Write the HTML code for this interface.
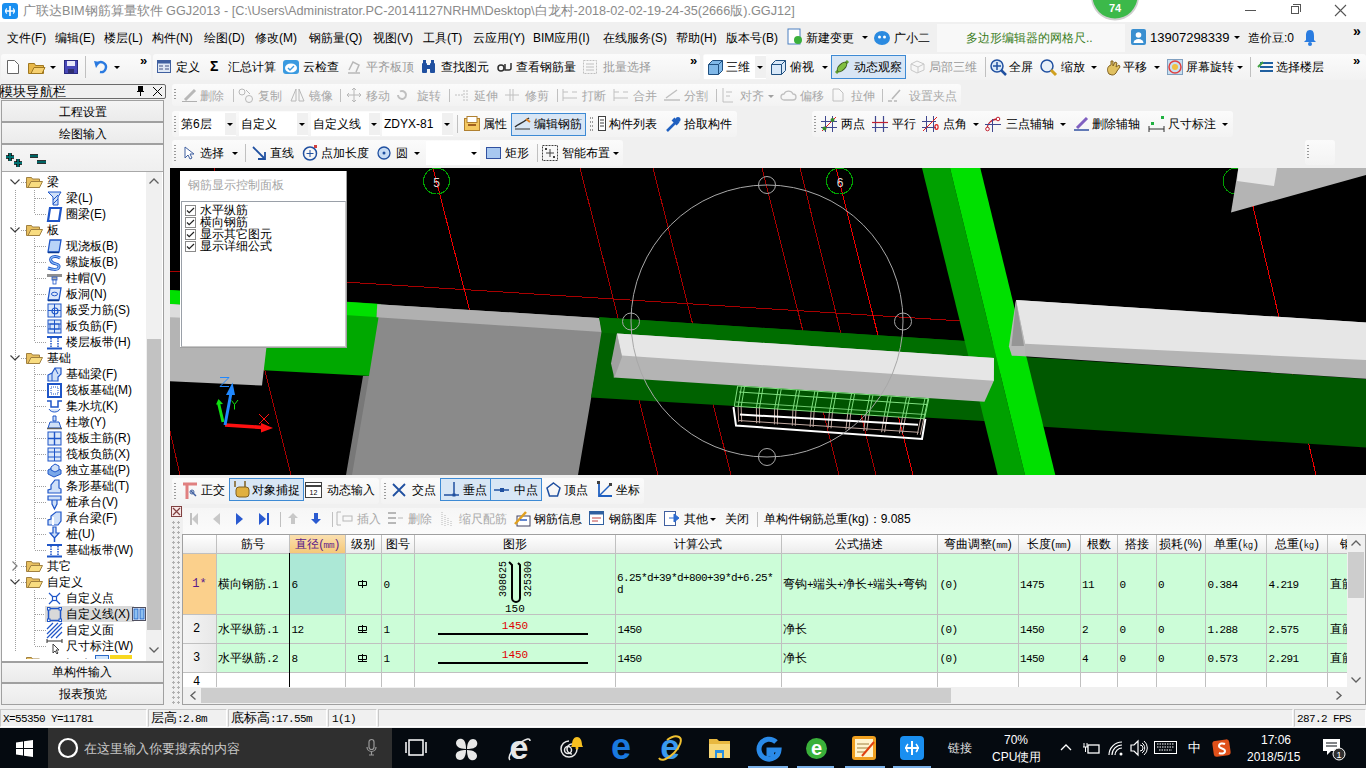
<!DOCTYPE html>
<html><head><meta charset="utf-8">
<style>
*{box-sizing:border-box;margin:0;padding:0}
html,body{width:1366px;height:768px;overflow:hidden;background:#f0f0f0;font-family:"Liberation Sans",sans-serif;font-size:12px;color:#000}
.a{position:absolute}
.t{position:absolute;white-space:nowrap}
svg{position:absolute;overflow:visible}
</style></head><body>
<div class="a" style="left:0px;top:0px;width:1366px;height:22px;background:#fff;"></div><svg class="a" style="left:2px;top:3px;" width="16" height="16" viewBox="0 0 16 16"><rect x="0" y="0" width="16" height="16" rx="3" fill="#1a8ff0"/><path d="M8 3v10M3 8h10" stroke="#fff" stroke-width="1.6" fill="none"/><path d="M5 5.5a3 3 0 0 0 0 5M11 5.5a3 3 0 0 1 0 5" stroke="#fff" stroke-width="1.2" fill="none"/></svg><div class="t" style="left:23px;top:3px;height:16px;line-height:16px;font-size:12.7px;color:#8a8a8a;">广联达BIM钢筋算量软件 GGJ2013 - [C:\Users\Administrator.PC-20141127NRHM\Desktop\白龙村-2018-02-02-19-24-35(2666版).GGJ12]</div><div class="a" style="left:1245px;top:10px;width:11px;height:1px;background:#555;"></div><div class="a" style="left:1291px;top:6px;width:8px;height:8px;border:1px solid #555;background:#fff"></div><div class="a" style="left:1293px;top:4px;width:8px;height:8px;border-top:1px solid #555;border-right:1px solid #555"></div><svg class="a" style="left:1335px;top:5px;" width="11" height="11" viewBox="0 0 11 11"><path d="M0 0L11 11M11 0L0 11" stroke="#555" stroke-width="1.1"/></svg><svg class="a" style="left:1090px;top:-29px;" width="50" height="50" viewBox="0 0 50 50"><circle cx="25" cy="25.5" r="24" fill="#cfcfcf"/><circle cx="25" cy="25" r="22.5" fill="#3cb94a"/><text x="25" y="41" font-size="11" font-weight="bold" fill="#fff" text-anchor="middle" font-family="Liberation Sans">74</text></svg><div class="a" style="left:0px;top:22px;width:1366px;height:31px;background:#f0f0f0;"></div><div class="t" style="left:7px;top:30px;height:16px;line-height:16px;font-size:12px;color:#000;">文件(F)</div><div class="t" style="left:55px;top:30px;height:16px;line-height:16px;font-size:12px;color:#000;">编辑(E)</div><div class="t" style="left:104px;top:30px;height:16px;line-height:16px;font-size:12px;color:#000;">楼层(L)</div><div class="t" style="left:152px;top:30px;height:16px;line-height:16px;font-size:12px;color:#000;">构件(N)</div><div class="t" style="left:204px;top:30px;height:16px;line-height:16px;font-size:12px;color:#000;">绘图(D)</div><div class="t" style="left:255px;top:30px;height:16px;line-height:16px;font-size:12px;color:#000;">修改(M)</div><div class="t" style="left:309px;top:30px;height:16px;line-height:16px;font-size:12px;color:#000;">钢筋量(Q)</div><div class="t" style="left:373px;top:30px;height:16px;line-height:16px;font-size:12px;color:#000;">视图(V)</div><div class="t" style="left:423px;top:30px;height:16px;line-height:16px;font-size:12px;color:#000;">工具(T)</div><div class="t" style="left:473px;top:30px;height:16px;line-height:16px;font-size:12px;color:#000;">云应用(Y)</div><div class="t" style="left:533px;top:30px;height:16px;line-height:16px;font-size:12px;color:#000;">BIM应用(I)</div><div class="t" style="left:603px;top:30px;height:16px;line-height:16px;font-size:12px;color:#000;">在线服务(S)</div><div class="t" style="left:676px;top:30px;height:16px;line-height:16px;font-size:12px;color:#000;">帮助(H)</div><div class="t" style="left:726px;top:30px;height:16px;line-height:16px;font-size:12px;color:#000;">版本号(B)</div><svg class="a" style="left:787px;top:29px;" width="16" height="16" viewBox="0 0 16 16"><rect x="1" y="0" width="12" height="15" fill="#fff" stroke="#4a7fc0"/><circle cx="11" cy="11" r="4" fill="#3bb03b"/></svg><div class="t" style="left:806px;top:30px;height:16px;line-height:16px;font-size:12px;color:#000;">新建变更</div><svg class="a" style="left:862px;top:36px;" width="6" height="3" viewBox="0 0 6 3"><polygon points="0,0 6,0 3,3" fill="#000"/></svg><svg class="a" style="left:874px;top:30px;" width="16" height="15" viewBox="0 0 16 15"><ellipse cx="8" cy="8" rx="8" ry="7" fill="#2a8ae0"/><circle cx="5.5" cy="7" r="1.5" fill="#fff"/><circle cx="10.5" cy="7" r="1.5" fill="#fff"/></svg><div class="t" style="left:894px;top:30px;height:16px;line-height:16px;font-size:12px;color:#000;">广小二</div><div class="a" style="left:937px;top:24px;width:188px;height:28px;background:#f8f8f8;"></div><div class="t" style="left:966px;top:30px;height:16px;line-height:16px;font-size:12px;color:#3a7d1c;">多边形编辑器的网格尺..</div><svg class="a" style="left:1131px;top:29px;" width="15" height="16" viewBox="0 0 15 16"><rect x="0" y="0" width="15" height="16" rx="2" fill="#3a8fd0"/><circle cx="7.5" cy="6" r="2.8" fill="#fff"/><path d="M2.5 14a5 4 0 0 1 10 0z" fill="#fff"/></svg><div class="t" style="left:1150px;top:30px;height:16px;line-height:16px;font-size:13px;color:#000;">13907298339</div><svg class="a" style="left:1234px;top:36px;" width="6" height="3" viewBox="0 0 6 3"><polygon points="0,0 6,0 3,3" fill="#000"/></svg><div class="t" style="left:1248px;top:30px;height:16px;line-height:16px;font-size:12px;color:#000;">造价豆:0</div><svg class="a" style="left:1303px;top:29px;" width="14" height="17" viewBox="0 0 14 17"><path d="M7 1C3.5 1 3 4 3 7v4L1 13h12l-2-2V7c0-3-.5-6-4-6z" fill="#2a7ce0"/><circle cx="7" cy="15" r="2" fill="#2a7ce0"/></svg><div class="t" style="left:1353px;top:23px;height:16px;line-height:16px;font-size:14px;color:#000;font-weight:bold">»</div><div class="a" style="left:1px;top:54px;width:150px;height:26px;background:linear-gradient(#fbfbfb,#f2f2f2);border-radius:3px"></div><div class="a" style="left:153px;top:54px;width:547px;height:26px;background:linear-gradient(#fbfbfb,#f2f2f2);border-radius:3px"></div><div class="a" style="left:703px;top:54px;width:663px;height:26px;background:linear-gradient(#fbfbfb,#f2f2f2);border-radius:3px"></div><svg class="a" style="left:7px;top:60px;" width="12" height="14" viewBox="0 0 12 14"><path d="M0.5 0.5h7l4 4v9h-11z" fill="#fff" stroke="#666"/></svg><svg class="a" style="left:28px;top:60px;" width="17" height="14" viewBox="0 0 17 14"><path d="M0.5 3.5h6l1 2h8v8h-15z" fill="#e8b84a" stroke="#a07820"/><path d="M3 13.5l3-6h11l-3 6z" fill="#f6d070" stroke="#a07820"/></svg><svg class="a" style="left:50px;top:66px;" width="6" height="3" viewBox="0 0 6 3"><polygon points="0,0 6,0 3,3" fill="#000"/></svg><svg class="a" style="left:64px;top:60px;" width="14" height="14" viewBox="0 0 14 14"><rect x="0.5" y="0.5" width="13" height="13" fill="#4848b8" stroke="#2a2a80"/><rect x="3" y="1" width="8" height="5" fill="#e8e8f8"/><rect x="4" y="9" width="6" height="4" fill="#303070"/></svg><div class="a" style="left:85px;top:56px;width:1px;height:22px;background:#c0c0c0;"></div><svg class="a" style="left:94px;top:60px;" width="12" height="13" viewBox="0 0 12 13"><path d="M3 4a5 5 0 1 1 3 8" stroke="#2a7ae0" stroke-width="2.4" fill="none"/><polygon points="0,1 6,2 2,8" fill="#2a7ae0"/></svg><svg class="a" style="left:114px;top:66px;" width="6" height="3" viewBox="0 0 6 3"><polygon points="0,0 6,0 3,3" fill="#000"/></svg><div class="t" style="left:140px;top:53px;height:16px;line-height:16px;font-size:13px;color:#000;font-weight:bold">»</div><svg class="a" style="left:157px;top:60px;" width="14" height="13" viewBox="0 0 14 13"><rect x="0.5" y="0.5" width="13" height="12" fill="#dfe8f5" stroke="#4060a0"/><rect x="0.5" y="0.5" width="13" height="3" fill="#4060a0"/><path d="M2 6h4M2 9h4M8 6h4M8 9h4" stroke="#405080"/></svg><div class="t" style="left:176px;top:59px;height:16px;line-height:16px;font-size:12px;color:#000;">定义</div><div class="t" style="left:210px;top:58px;height:16px;line-height:16px;font-size:14px;color:#000;font-weight:bold">Σ</div><div class="t" style="left:228px;top:59px;height:16px;line-height:16px;font-size:12px;color:#000;">汇总计算</div><svg class="a" style="left:283px;top:60px;" width="16" height="14" viewBox="0 0 16 14"><rect x="0" y="0" width="16" height="14" rx="3" fill="#3a9ae0"/><ellipse cx="8" cy="8" rx="6" ry="4.5" fill="#fff"/><path d="M5 8l2 2 4-4" stroke="#3a9ae0" stroke-width="1.4" fill="none"/></svg><div class="t" style="left:303px;top:59px;height:16px;line-height:16px;font-size:12px;color:#000;">云检查</div><svg class="a" style="left:347px;top:60px;" width="14" height="14" viewBox="0 0 14 14"><path d="M1 13h12M2 10l4-8 6 3-3 7" stroke="#b8b8b8" stroke-width="1.5" fill="none"/></svg><div class="t" style="left:366px;top:59px;height:16px;line-height:16px;font-size:12px;color:#9a9a9a;">平齐板顶</div><svg class="a" style="left:421px;top:60px;" width="16" height="14" viewBox="0 0 16 14"><rect x="1" y="3" width="5" height="10" rx="1" fill="#2050a0"/><rect x="9" y="3" width="5" height="10" rx="1" fill="#2050a0"/><rect x="5" y="5" width="5" height="4" fill="#2050a0"/><rect x="2" y="0" width="3" height="4" fill="#2050a0"/><rect x="10" y="0" width="3" height="4" fill="#2050a0"/></svg><div class="t" style="left:441px;top:59px;height:16px;line-height:16px;font-size:12px;color:#000;">查找图元</div><svg class="a" style="left:497px;top:62px;" width="16" height="10" viewBox="0 0 16 10"><circle cx="4" cy="6" r="3" stroke="#303030" stroke-width="1.5" fill="none"/><path d="M8 2v6h4a2 2 0 0 0 2-2V1" stroke="#303030" stroke-width="1.5" fill="none"/></svg><div class="t" style="left:516px;top:59px;height:16px;line-height:16px;font-size:12px;color:#000;">查看钢筋量</div><svg class="a" style="left:583px;top:60px;" width="14" height="14" viewBox="0 0 14 14"><rect x="0.5" y="0.5" width="13" height="13" fill="none" stroke="#c0c0c0" stroke-dasharray="2 1"/><path d="M3 4h8M3 7h8M3 10h8" stroke="#c0c0c0"/></svg><div class="t" style="left:603px;top:59px;height:16px;line-height:16px;font-size:12px;color:#9a9a9a;">批量选择</div><div class="t" style="left:690px;top:53px;height:16px;line-height:16px;font-size:13px;color:#000;font-weight:bold">»</div><div class="a" style="left:704px;top:55px;width:62px;height:24px;background:#fff;"></div><div class="a" style="left:755px;top:56px;width:11px;height:22px;background:#f0f0f0;"></div><svg class="a" style="left:708px;top:60px;" width="15" height="15" viewBox="0 0 15 15"><path d="M0.5 4.5l4-4h10v10l-4 4h-10z" fill="#80b8e8" stroke="#205080"/><path d="M0.5 4.5h10v10M10.5 4.5l4-4" stroke="#205080" fill="none"/></svg><div class="t" style="left:726px;top:59px;height:16px;line-height:16px;font-size:12px;color:#000;">三维</div><svg class="a" style="left:757px;top:66px;" width="6" height="3" viewBox="0 0 6 3"><polygon points="0,0 6,0 3,3" fill="#000"/></svg><svg class="a" style="left:771px;top:60px;" width="15" height="15" viewBox="0 0 15 15"><path d="M0.5 4.5l4-4h10v10l-4 4h-10z" fill="#d8e8f8" stroke="#205080"/><path d="M0.5 4.5h10v10M10.5 4.5l4-4" stroke="#205080" fill="none"/></svg><div class="t" style="left:790px;top:59px;height:16px;line-height:16px;font-size:12px;color:#000;">俯视</div><svg class="a" style="left:822px;top:66px;" width="6" height="3" viewBox="0 0 6 3"><polygon points="0,0 6,0 3,3" fill="#000"/></svg><div class="a" style="left:831px;top:55px;width:75px;height:24px;background:#d8e6f5;border:1px solid #3d8ad4"></div><svg class="a" style="left:834px;top:59px;" width="16" height="16" viewBox="0 0 16 16"><path d="M2 14L14 2" stroke="#60a030" stroke-width="3"/><ellipse cx="8" cy="8" rx="6" ry="3" transform="rotate(-45 8 8)" fill="#80c040" stroke="#406020"/></svg><div class="t" style="left:854px;top:59px;height:16px;line-height:16px;font-size:12px;color:#000;">动态观察</div><svg class="a" style="left:910px;top:60px;" width="15" height="14" viewBox="0 0 15 14"><path d="M1 4l6-3 7 3v6l-7 3-6-3z" fill="none" stroke="#c8c8c8"/><path d="M1 4l7 3 6-3M8 7v6" stroke="#c8c8c8" fill="none"/></svg><div class="t" style="left:929px;top:59px;height:16px;line-height:16px;font-size:12px;color:#9a9a9a;">局部三维</div><div class="a" style="left:985px;top:57px;width:1px;height:20px;background:#c0c0c0;"></div><svg class="a" style="left:990px;top:59px;" width="17" height="16" viewBox="0 0 17 16"><circle cx="7" cy="7" r="6" fill="#d8e8f8" stroke="#2050a0" stroke-width="1.5"/><path d="M7 3v8M3 7h8" stroke="#2050a0" stroke-width="1.5"/><path d="M11 11l5 5" stroke="#2050a0" stroke-width="2.5"/></svg><div class="t" style="left:1009px;top:59px;height:16px;line-height:16px;font-size:12px;color:#000;">全屏</div><svg class="a" style="left:1040px;top:59px;" width="17" height="16" viewBox="0 0 17 16"><circle cx="7" cy="7" r="6" fill="#e8f0f8" stroke="#2050a0" stroke-width="1.5"/><path d="M11 11l5 5" stroke="#d0a020" stroke-width="3"/></svg><div class="t" style="left:1061px;top:59px;height:16px;line-height:16px;font-size:12px;color:#000;">缩放</div><svg class="a" style="left:1091px;top:66px;" width="6" height="3" viewBox="0 0 6 3"><polygon points="0,0 6,0 3,3" fill="#000"/></svg><svg class="a" style="left:1106px;top:59px;" width="17" height="16" viewBox="0 0 17 16"><path d="M3 15c-2-3-2-6 0-8l2-1V2l2 0v5l2-4 2 1-1 4 3-2 1 2-3 4c-1 3-3 4-5 4z" fill="#e0c060" stroke="#806020"/></svg><div class="t" style="left:1123px;top:59px;height:16px;line-height:16px;font-size:12px;color:#000;">平移</div><svg class="a" style="left:1154px;top:66px;" width="6" height="3" viewBox="0 0 6 3"><polygon points="0,0 6,0 3,3" fill="#000"/></svg><svg class="a" style="left:1167px;top:59px;" width="16" height="16" viewBox="0 0 16 16"><rect x="0.5" y="0.5" width="15" height="15" fill="#c8e0f0" stroke="#80a0c0"/><circle cx="8" cy="8" r="6" fill="none" stroke="#e04040" stroke-width="1.5"/><circle cx="8" cy="8" r="3" fill="#f0c040"/></svg><div class="t" style="left:1186px;top:59px;height:16px;line-height:16px;font-size:12px;color:#000;">屏幕旋转</div><svg class="a" style="left:1237px;top:66px;" width="6" height="3" viewBox="0 0 6 3"><polygon points="0,0 6,0 3,3" fill="#000"/></svg><div class="a" style="left:1250px;top:57px;width:1px;height:20px;background:#c0c0c0;"></div><svg class="a" style="left:1258px;top:60px;" width="16" height="14" viewBox="0 0 16 14"><path d="M2 3h13M2 7h13M2 11h13" stroke="#2060a0" stroke-width="2"/><path d="M0 7l5-5" stroke="#40a040" stroke-width="2"/></svg><div class="t" style="left:1276px;top:59px;height:16px;line-height:16px;font-size:12px;color:#000;">选择楼层</div><div class="t" style="left:1353px;top:53px;height:16px;line-height:16px;font-size:13px;color:#000;font-weight:bold">»</div><div class="a" style="left:0px;top:84px;width:166px;height:622px;background:#f0f0f0;"></div><div class="a" style="left:0;top:84px;width:166px;height:15px;border:1px solid #6a6a6a;border-radius:2px;background:#f0f0f0"></div><div class="t" style="left:0px;top:84px;height:16px;line-height:16px;font-size:12.5px;color:#000;letter-spacing:0.2px">模块导航栏</div><svg class="a" style="left:137px;top:86px;" width="7" height="10" viewBox="0 0 7 10"><path d="M1 0.5h5M1.5 1v4.5M5.5 1v4.5M0 5.5h7M3.5 6v4" stroke="#000" fill="none"/><rect x="2" y="1" width="3" height="4" fill="#000"/></svg><svg class="a" style="left:153px;top:87px;" width="9" height="9" viewBox="0 0 9 9"><path d="M0 0L9 9M9 0L0 9" stroke="#000" stroke-width="1"/></svg><div class="a" style="left:1px;top:100px;width:163px;height:22px;border:1px solid #a0a0a0;background:linear-gradient(#f4f4f4,#ebebeb)"></div><div class="t" style="left:59px;top:104px;height:16px;line-height:16px;font-size:12px;color:#000;">工程设置</div><div class="a" style="left:1px;top:122px;width:163px;height:22px;border:1px solid #a0a0a0;background:linear-gradient(#f4f4f4,#ebebeb)"></div><div class="t" style="left:59px;top:126px;height:16px;line-height:16px;font-size:12px;color:#000;">绘图输入</div><div class="a" style="left:1px;top:144px;width:163px;height:518px;border:1px solid #a0a0a0;background:#fff"></div><div class="a" style="left:2px;top:145px;width:161px;height:27px;background:linear-gradient(#f6f6f6,#efefef);"></div><div class="a" style="left:2px;top:171px;width:161px;height:1px;background:#a8a8a8;"></div><svg class="a" style="left:6px;top:152px;" width="18" height="16" viewBox="0 0 18 16"><path d="M4 1v8M0 5h8" stroke="#000" stroke-width="3.6"/><path d="M4 1v8M0 5h8" stroke="#007070" stroke-width="1.8"/><path d="M12 7v8M8 11h8" stroke="#000" stroke-width="3.6"/><path d="M12 7v8M8 11h8" stroke="#007070" stroke-width="1.8"/></svg><svg class="a" style="left:29px;top:154px;" width="18" height="10" viewBox="0 0 18 10"><path d="M1 2h8" stroke="#000" stroke-width="3.6"/><path d="M1 2h8" stroke="#007070" stroke-width="1.8"/><path d="M8 8h9" stroke="#000" stroke-width="3.6"/><path d="M8 8h9" stroke="#007070" stroke-width="1.8"/></svg><div class="a" style="left:2px;top:172px;width:144px;height:489px;overflow:hidden"><div class="a" style="left:13px;top:18px;width:1px;height:462px;background:repeating-linear-gradient(#a0a0a0 0 1px,transparent 1px 2px)"></div><div class="a" style="left:32px;top:18px;width:1px;height:24px;background:repeating-linear-gradient(#a0a0a0 0 1px,transparent 1px 2px)"></div><div class="a" style="left:32px;top:66px;width:1px;height:104px;background:repeating-linear-gradient(#a0a0a0 0 1px,transparent 1px 2px)"></div><div class="a" style="left:32px;top:194px;width:1px;height:184px;background:repeating-linear-gradient(#a0a0a0 0 1px,transparent 1px 2px)"></div><div class="a" style="left:32px;top:418px;width:1px;height:56px;background:repeating-linear-gradient(#a0a0a0 0 1px,transparent 1px 2px)"></div><div class="a" style="left:19px;top:10px;width:5px;height:1px;background:repeating-linear-gradient(90deg,#a0a0a0 0 1px,transparent 1px 2px)"></div><svg class="a" style="left:8px;top:7px" width="10" height="6" viewBox="0 0 10 6"><path d="M0.5 0.5L5 5 9.5 0.5" stroke="#404040" stroke-width="1.2" fill="none"/></svg><svg class="a" style="left:24px;top:4px" width="17" height="12" viewBox="0 0 17 12"><path d="M0.5 1.5h5l1 1.5h7v8.5h-13z" fill="#e8c060" stroke="#a08040"/><path d="M2 11.5l3-6h11.5l-3 6z" fill="#f8dc80" stroke="#a08040"/></svg><div class="t" style="left:45px;top:2px;line-height:16px;font-size:12px">梁</div><div class="a" style="left:33px;top:26px;width:11px;height:1px;background:repeating-linear-gradient(90deg,#a0a0a0 0 1px,transparent 1px 2px)"></div><svg class="a" style="left:45px;top:19px" width="15" height="15" viewBox="0 0 15 15"><path d="M1 1h13l-3 5v8H6V6z" fill="#cfe0f8" stroke="#1f56c8"/><path d="M6 9l5-5M6 13l5-5" stroke="#1f56c8"/></svg><div class="t" style="left:64px;top:18px;line-height:16px;font-size:12px">梁(L)</div><div class="a" style="left:33px;top:42px;width:11px;height:1px;background:repeating-linear-gradient(90deg,#a0a0a0 0 1px,transparent 1px 2px)"></div><svg class="a" style="left:45px;top:35px" width="15" height="15" viewBox="0 0 15 15"><path d="M3 1h11l-2 13H1z" fill="#fff" stroke="#1f56c8" stroke-width="2.2"/></svg><div class="t" style="left:64px;top:34px;line-height:16px;font-size:12px">圈梁(E)</div><div class="a" style="left:19px;top:58px;width:5px;height:1px;background:repeating-linear-gradient(90deg,#a0a0a0 0 1px,transparent 1px 2px)"></div><svg class="a" style="left:8px;top:55px" width="10" height="6" viewBox="0 0 10 6"><path d="M0.5 0.5L5 5 9.5 0.5" stroke="#404040" stroke-width="1.2" fill="none"/></svg><svg class="a" style="left:24px;top:52px" width="17" height="12" viewBox="0 0 17 12"><path d="M0.5 1.5h5l1 1.5h7v8.5h-13z" fill="#e8c060" stroke="#a08040"/><path d="M2 11.5l3-6h11.5l-3 6z" fill="#f8dc80" stroke="#a08040"/></svg><div class="t" style="left:45px;top:50px;line-height:16px;font-size:12px">板</div><div class="a" style="left:33px;top:74px;width:11px;height:1px;background:repeating-linear-gradient(90deg,#a0a0a0 0 1px,transparent 1px 2px)"></div><svg class="a" style="left:45px;top:67px" width="15" height="15" viewBox="0 0 15 15"><path d="M3 1h11l-2 12H1z" fill="#b8d4f8" stroke="#1f56c8" stroke-width="1.3"/><path d="M1 13.5h11" stroke="#0a3a90" stroke-width="1.5"/></svg><div class="t" style="left:64px;top:66px;line-height:16px;font-size:12px">现浇板(B)</div><div class="a" style="left:33px;top:90px;width:11px;height:1px;background:repeating-linear-gradient(90deg,#a0a0a0 0 1px,transparent 1px 2px)"></div><svg class="a" style="left:45px;top:83px" width="15" height="15" viewBox="0 0 15 15"><path d="M13 3C8 0 2 2 4 6s9 2 8 6-8 2-11 1" fill="none" stroke="#1f56c8" stroke-width="3"/><path d="M13 3C8 0 2 2 4 6s9 2 8 6-8 2-11 1" fill="none" stroke="#8ec0f8" stroke-width="1.2"/></svg><div class="t" style="left:64px;top:82px;line-height:16px;font-size:12px">螺旋板(B)</div><div class="a" style="left:33px;top:106px;width:11px;height:1px;background:repeating-linear-gradient(90deg,#a0a0a0 0 1px,transparent 1px 2px)"></div><svg class="a" style="left:45px;top:99px" width="15" height="15" viewBox="0 0 15 15"><rect x="0" y="3" width="15" height="3" fill="#909090"/><rect x="5" y="6" width="5" height="3" fill="#b0b0b0" stroke="#1f56c8" stroke-width="0.8"/><rect x="6" y="9" width="3" height="4" fill="#fff" stroke="#1f56c8" stroke-width="0.8"/></svg><div class="t" style="left:64px;top:98px;line-height:16px;font-size:12px">柱帽(V)</div><div class="a" style="left:33px;top:122px;width:11px;height:1px;background:repeating-linear-gradient(90deg,#a0a0a0 0 1px,transparent 1px 2px)"></div><svg class="a" style="left:45px;top:115px" width="15" height="15" viewBox="0 0 15 15"><path d="M3 1h11l-2 12H1z" fill="#dbe8fa" stroke="#1f56c8" stroke-width="1.3"/><ellipse cx="7.5" cy="7" rx="3" ry="1.8" fill="none" stroke="#1f56c8"/><path d="M1 13.5h11" stroke="#0a3a90" stroke-width="1.5"/></svg><div class="t" style="left:64px;top:114px;line-height:16px;font-size:12px">板洞(N)</div><div class="a" style="left:33px;top:138px;width:11px;height:1px;background:repeating-linear-gradient(90deg,#a0a0a0 0 1px,transparent 1px 2px)"></div><svg class="a" style="left:45px;top:131px" width="15" height="15" viewBox="0 0 15 15"><rect x="1" y="1" width="13" height="13" fill="#dbe8fa" stroke="#1f56c8"/><path d="M7.5 1v13M1 7.5h13" stroke="#1f56c8"/><circle cx="8" cy="8" r="3" fill="none" stroke="#1f56c8" stroke-width="1.2"/></svg><div class="t" style="left:64px;top:130px;line-height:16px;font-size:12px">板受力筋(S)</div><div class="a" style="left:33px;top:154px;width:11px;height:1px;background:repeating-linear-gradient(90deg,#a0a0a0 0 1px,transparent 1px 2px)"></div><svg class="a" style="left:45px;top:147px" width="15" height="15" viewBox="0 0 15 15"><rect x="1" y="1" width="13" height="13" fill="#dbe8fa" stroke="#1f56c8"/><path d="M7.5 1v13M1 5h13M1 10h13" stroke="#1f56c8"/><rect x="3" y="5" width="9" height="5" fill="none" stroke="#1f56c8"/></svg><div class="t" style="left:64px;top:146px;line-height:16px;font-size:12px">板负筋(F)</div><div class="a" style="left:33px;top:170px;width:11px;height:1px;background:repeating-linear-gradient(90deg,#a0a0a0 0 1px,transparent 1px 2px)"></div><svg class="a" style="left:45px;top:163px" width="15" height="15" viewBox="0 0 15 15"><path d="M0 2h15M0 13.5h15" stroke="#1f56c8" stroke-width="2"/><path d="M4 3v10M11 3v10" stroke="#1f56c8" stroke-width="1.5" stroke-dasharray="1.5 1"/></svg><div class="t" style="left:64px;top:162px;line-height:16px;font-size:12px">楼层板带(H)</div><div class="a" style="left:19px;top:186px;width:5px;height:1px;background:repeating-linear-gradient(90deg,#a0a0a0 0 1px,transparent 1px 2px)"></div><svg class="a" style="left:8px;top:183px" width="10" height="6" viewBox="0 0 10 6"><path d="M0.5 0.5L5 5 9.5 0.5" stroke="#404040" stroke-width="1.2" fill="none"/></svg><svg class="a" style="left:24px;top:180px" width="17" height="12" viewBox="0 0 17 12"><path d="M0.5 1.5h5l1 1.5h7v8.5h-13z" fill="#e8c060" stroke="#a08040"/><path d="M2 11.5l3-6h11.5l-3 6z" fill="#f8dc80" stroke="#a08040"/></svg><div class="t" style="left:45px;top:178px;line-height:16px;font-size:12px">基础</div><div class="a" style="left:33px;top:202px;width:11px;height:1px;background:repeating-linear-gradient(90deg,#a0a0a0 0 1px,transparent 1px 2px)"></div><svg class="a" style="left:45px;top:195px" width="15" height="15" viewBox="0 0 15 15"><path d="M1 14V8l4-2 3-5h6v6l-3 3v4z" fill="#cfe0f8" stroke="#1f56c8" stroke-width="1.2"/><path d="M5 6v8M8 1l3 6" stroke="#1f56c8"/></svg><div class="t" style="left:64px;top:194px;line-height:16px;font-size:12px">基础梁(F)</div><div class="a" style="left:33px;top:218px;width:11px;height:1px;background:repeating-linear-gradient(90deg,#a0a0a0 0 1px,transparent 1px 2px)"></div><svg class="a" style="left:45px;top:211px" width="15" height="15" viewBox="0 0 15 15"><rect x="1" y="1" width="13" height="13" fill="#fff" stroke="#1f56c8" stroke-width="2"/><path d="M4 4h7v7H4z" fill="none" stroke="#1f56c8" stroke-dasharray="1 1"/></svg><div class="t" style="left:64px;top:210px;line-height:16px;font-size:12px">筏板基础(M)</div><div class="a" style="left:33px;top:234px;width:11px;height:1px;background:repeating-linear-gradient(90deg,#a0a0a0 0 1px,transparent 1px 2px)"></div><svg class="a" style="left:45px;top:227px" width="15" height="15" viewBox="0 0 15 15"><path d="M0 2h4v6h7V2h4" fill="none" stroke="#1f56c8" stroke-width="1.5"/><path d="M2 10c2 4 9 4 11 0" fill="#dbe8fa" stroke="#1f56c8"/></svg><div class="t" style="left:64px;top:226px;line-height:16px;font-size:12px">集水坑(K)</div><div class="a" style="left:33px;top:250px;width:11px;height:1px;background:repeating-linear-gradient(90deg,#a0a0a0 0 1px,transparent 1px 2px)"></div><svg class="a" style="left:45px;top:243px" width="15" height="15" viewBox="0 0 15 15"><path d="M6 1h3v5H6zM3 7h9l2 6H1z" fill="#cfe0f8" stroke="#1f56c8"/><path d="M0 13.5h15" stroke="#606060" stroke-width="1.5"/></svg><div class="t" style="left:64px;top:242px;line-height:16px;font-size:12px">柱墩(Y)</div><div class="a" style="left:33px;top:266px;width:11px;height:1px;background:repeating-linear-gradient(90deg,#a0a0a0 0 1px,transparent 1px 2px)"></div><svg class="a" style="left:45px;top:259px" width="15" height="15" viewBox="0 0 15 15"><rect x="1" y="1" width="13" height="13" fill="#dbe8fa" stroke="#1f56c8"/><path d="M7.5 1v13M1 7.5h13" stroke="#1f56c8" stroke-width="1.4"/></svg><div class="t" style="left:64px;top:258px;line-height:16px;font-size:12px">筏板主筋(R)</div><div class="a" style="left:33px;top:282px;width:11px;height:1px;background:repeating-linear-gradient(90deg,#a0a0a0 0 1px,transparent 1px 2px)"></div><svg class="a" style="left:45px;top:275px" width="15" height="15" viewBox="0 0 15 15"><rect x="1" y="1" width="13" height="13" fill="#dbe8fa" stroke="#1f56c8"/><path d="M7.5 1v13M1 5h13M1 10h13" stroke="#1f56c8"/></svg><div class="t" style="left:64px;top:274px;line-height:16px;font-size:12px">筏板负筋(X)</div><div class="a" style="left:33px;top:298px;width:11px;height:1px;background:repeating-linear-gradient(90deg,#a0a0a0 0 1px,transparent 1px 2px)"></div><svg class="a" style="left:45px;top:291px" width="15" height="15" viewBox="0 0 15 15"><path d="M1 7l6-3 7 3v4l-7 3-6-3z" fill="#7aa8e8" stroke="#1f56c8"/><path d="M4 4l4-3 4 2v4l-4 2-4-2z" fill="#cfe0f8" stroke="#1f56c8"/></svg><div class="t" style="left:64px;top:290px;line-height:16px;font-size:12px">独立基础(P)</div><div class="a" style="left:33px;top:314px;width:11px;height:1px;background:repeating-linear-gradient(90deg,#a0a0a0 0 1px,transparent 1px 2px)"></div><svg class="a" style="left:45px;top:307px" width="15" height="15" viewBox="0 0 15 15"><path d="M1 14v-3l3-1V6l4-5h4v8l2 1v4z" fill="#cfe0f8" stroke="#1f56c8" stroke-width="1.2"/></svg><div class="t" style="left:64px;top:306px;line-height:16px;font-size:12px">条形基础(T)</div><div class="a" style="left:33px;top:330px;width:11px;height:1px;background:repeating-linear-gradient(90deg,#a0a0a0 0 1px,transparent 1px 2px)"></div><svg class="a" style="left:45px;top:323px" width="15" height="15" viewBox="0 0 15 15"><path d="M1 1h13v4H1zM5 5h5v4l-2.5 5L5 9z" fill="#cfe0f8" stroke="#1f56c8" stroke-width="1.2"/></svg><div class="t" style="left:64px;top:322px;line-height:16px;font-size:12px">桩承台(V)</div><div class="a" style="left:33px;top:346px;width:11px;height:1px;background:repeating-linear-gradient(90deg,#a0a0a0 0 1px,transparent 1px 2px)"></div><svg class="a" style="left:45px;top:339px" width="15" height="15" viewBox="0 0 15 15"><path d="M1 14V9l3-1V5l5-4h5v9l-3 4z" fill="#cfe0f8" stroke="#1f56c8" stroke-width="1.2"/><path d="M6 6v8" stroke="#fff" stroke-width="2"/></svg><div class="t" style="left:64px;top:338px;line-height:16px;font-size:12px">承台梁(F)</div><div class="a" style="left:33px;top:362px;width:11px;height:1px;background:repeating-linear-gradient(90deg,#a0a0a0 0 1px,transparent 1px 2px)"></div><svg class="a" style="left:45px;top:355px" width="15" height="15" viewBox="0 0 15 15"><path d="M6 0h3v6h3l-4.5 5L3 6h3z" fill="#cfe0f8" stroke="#1f56c8" stroke-width="1.2"/><path d="M7.5 11v4" stroke="#1f56c8" stroke-width="1.5"/></svg><div class="t" style="left:64px;top:354px;line-height:16px;font-size:12px">桩(U)</div><div class="a" style="left:33px;top:378px;width:11px;height:1px;background:repeating-linear-gradient(90deg,#a0a0a0 0 1px,transparent 1px 2px)"></div><svg class="a" style="left:45px;top:371px" width="15" height="15" viewBox="0 0 15 15"><path d="M0 2h15M0 13.5h15" stroke="#1f56c8" stroke-width="2"/><path d="M4 3v10M11 3v10" stroke="#1f56c8" stroke-width="1.5" stroke-dasharray="1.5 1"/></svg><div class="t" style="left:64px;top:370px;line-height:16px;font-size:12px">基础板带(W)</div><div class="a" style="left:19px;top:394px;width:5px;height:1px;background:repeating-linear-gradient(90deg,#a0a0a0 0 1px,transparent 1px 2px)"></div><svg class="a" style="left:10px;top:389px" width="6" height="10" viewBox="0 0 6 10"><path d="M0.5 0.5L5 5 0.5 9.5" stroke="#808080" stroke-width="1.2" fill="none"/></svg><svg class="a" style="left:24px;top:388px" width="17" height="12" viewBox="0 0 17 12"><path d="M0.5 1.5h5l1 1.5h7v8.5h-13z" fill="#e8c060" stroke="#a08040"/><path d="M2 11.5l3-6h11.5l-3 6z" fill="#f8dc80" stroke="#a08040"/></svg><div class="t" style="left:45px;top:386px;line-height:16px;font-size:12px">其它</div><div class="a" style="left:19px;top:410px;width:5px;height:1px;background:repeating-linear-gradient(90deg,#a0a0a0 0 1px,transparent 1px 2px)"></div><svg class="a" style="left:8px;top:407px" width="10" height="6" viewBox="0 0 10 6"><path d="M0.5 0.5L5 5 9.5 0.5" stroke="#404040" stroke-width="1.2" fill="none"/></svg><svg class="a" style="left:24px;top:404px" width="17" height="12" viewBox="0 0 17 12"><path d="M0.5 1.5h5l1 1.5h7v8.5h-13z" fill="#e8c060" stroke="#a08040"/><path d="M2 11.5l3-6h11.5l-3 6z" fill="#f8dc80" stroke="#a08040"/></svg><div class="t" style="left:45px;top:402px;line-height:16px;font-size:12px">自定义</div><div class="a" style="left:33px;top:426px;width:11px;height:1px;background:repeating-linear-gradient(90deg,#a0a0a0 0 1px,transparent 1px 2px)"></div><svg class="a" style="left:45px;top:419px" width="15" height="15" viewBox="0 0 15 15"><path d="M2 2l11 11M13 2L2 13" stroke="#1f56c8" stroke-width="1.2"/><rect x="5.5" y="5.5" width="4" height="4" fill="#fff" stroke="#1f56c8" stroke-width="1.2"/></svg><div class="t" style="left:64px;top:418px;line-height:16px;font-size:12px">自定义点</div><div class="a" style="left:33px;top:442px;width:11px;height:1px;background:repeating-linear-gradient(90deg,#a0a0a0 0 1px,transparent 1px 2px)"></div><div class="a" style="left:43px;top:434px;width:89px;height:16px;background:#d9d9d9"></div><svg class="a" style="left:45px;top:435px" width="15" height="15" viewBox="0 0 15 15"><rect x="1.5" y="1.5" width="12" height="12" fill="none" stroke="#1f56c8" stroke-width="1.5"/><g fill="#fff" stroke="#1f56c8"><rect x="0.5" y="0.5" width="2.5" height="2.5"/><rect x="12" y="0.5" width="2.5" height="2.5"/><rect x="0.5" y="12" width="2.5" height="2.5"/><rect x="12" y="12" width="2.5" height="2.5"/></g></svg><div class="t" style="left:64px;top:434px;line-height:16px;font-size:12px">自定义线(X)</div><div class="a" style="left:33px;top:458px;width:11px;height:1px;background:repeating-linear-gradient(90deg,#a0a0a0 0 1px,transparent 1px 2px)"></div><svg class="a" style="left:45px;top:451px" width="15" height="15" viewBox="0 0 15 15"><path d="M0 6L6 0M0 11L11 0M0 15L15 0M4 15L15 4M9 15l6-6" stroke="#1f56c8" stroke-width="1.2"/></svg><div class="t" style="left:64px;top:450px;line-height:16px;font-size:12px">自定义面</div><div class="a" style="left:33px;top:474px;width:11px;height:1px;background:repeating-linear-gradient(90deg,#a0a0a0 0 1px,transparent 1px 2px)"></div><svg class="a" style="left:45px;top:467px" width="15" height="15" viewBox="0 0 15 15"><path d="M0 2h15M0 0v4M15 0v4" stroke="#303030"/><path d="M6 5v9l2-2 2 3 1-1-2-3h3z" fill="#fff" stroke="#404040"/></svg><div class="t" style="left:64px;top:466px;line-height:16px;font-size:12px">尺寸标注(W)</div></div><svg class="a" style="left:132px;top:607px;" width="14" height="14" viewBox="0 0 14 14"><rect x="0.5" y="0.5" width="13" height="13" fill="#fff" stroke="#505060"/><rect x="2" y="2" width="4" height="10" fill="#8ec0f0" stroke="#2a6ac8"/><rect x="8" y="2" width="4" height="10" fill="#8ec0f0" stroke="#2a6ac8"/></svg><div class="a" style="left:2px;top:654px;width:144px;height:5px;overflow:hidden"><svg class="a" style="left:24px;top:2px" width="17" height="12" viewBox="0 0 17 12"><path d="M0.5 1.5h5l1 1.5h7v8.5h-13z" fill="#e8c060" stroke="#a08040"/></svg><div class="t" style="left:64px;top:2px;line-height:16px;font-size:12px">运动</div><div class="a" style="left:93px;top:1px;width:14px;height:10px;border:1px solid #2a6ac8;background:#cfe4fa"></div><div class="a" style="left:108px;top:1px;width:22px;height:10px;background:#f8d820"></div></div><div class="a" style="left:146px;top:172px;width:16px;height:489px;background:#f0f0f0;"></div><svg class="a" style="left:149px;top:178px;" width="10" height="6" viewBox="0 0 10 6"><path d="M0.5 5.5L5 1 9.5 5.5" stroke="#606060" stroke-width="1.3" fill="none"/></svg><div class="a" style="left:147px;top:339px;width:14px;height:291px;background:#c2c2c2;"></div><svg class="a" style="left:149px;top:647px;" width="10" height="6" viewBox="0 0 10 6"><path d="M0.5 0.5L5 5 9.5 0.5" stroke="#606060" stroke-width="1.3" fill="none"/></svg><div class="a" style="left:1px;top:662px;width:163px;height:21px;border:1px solid #a0a0a0;background:linear-gradient(#f4f4f4,#ebebeb)"></div><div class="t" style="left:52px;top:664px;height:16px;line-height:16px;font-size:12px;color:#000;">单构件输入</div><div class="a" style="left:1px;top:683px;width:163px;height:22px;border:1px solid #a0a0a0;background:linear-gradient(#f4f4f4,#ebebeb)"></div><div class="t" style="left:59px;top:686px;height:16px;line-height:16px;font-size:12px;color:#000;">报表预览</div><div class="a" style="left:172px;top:84px;width:789px;height:22px;background:linear-gradient(#fbfbfb,#f3f3f3);border-radius:3px"></div><div class="a" style="left:174px;top:89px;width:2px;height:12px;background:repeating-linear-gradient(#9a9a9a 0 1px,transparent 1px 3px)"></div><svg class="a" style="left:181px;top:88px;" width="17" height="14" viewBox="0 0 17 14"><path d="M1 13.5h15" stroke="#b0b0b0"/><path d="M4 12l10-10" stroke="#b8b8b8" stroke-width="3"/></svg><div class="t" style="left:200px;top:88px;height:16px;line-height:16px;font-size:12px;color:#a8a8a8;">删除</div><div class="a" style="left:233px;top:89px;width:1px;height:13px;background:#c0c0c0;"></div><svg class="a" style="left:238px;top:88px;" width="16" height="15" viewBox="0 0 16 15"><circle cx="4" cy="4" r="3" fill="none" stroke="#b8b8b8"/><circle cx="11" cy="11" r="3.5" fill="none" stroke="#b8b8b8"/><path d="M8 2l4 4" stroke="#b8b8b8"/></svg><div class="t" style="left:258px;top:88px;height:16px;line-height:16px;font-size:12px;color:#a8a8a8;">复制</div><svg class="a" style="left:290px;top:88px;" width="15" height="14" viewBox="0 0 15 14"><path d="M6 1L1 13h5zM9 1l5 12H9z" fill="none" stroke="#b8b8b8"/></svg><div class="t" style="left:309px;top:88px;height:16px;line-height:16px;font-size:12px;color:#a8a8a8;">镜像</div><div class="a" style="left:340px;top:89px;width:1px;height:13px;background:#c0c0c0;"></div><svg class="a" style="left:347px;top:88px;" width="14" height="14" viewBox="0 0 14 14"><path d="M7 0v14M0 7h14M5 2l2-2 2 2M5 12l2 2 2-2M2 5l-2 2 2 2M12 5l2 2-2 2" stroke="#b8b8b8" fill="none"/></svg><div class="t" style="left:366px;top:88px;height:16px;line-height:16px;font-size:12px;color:#a8a8a8;">移动</div><svg class="a" style="left:396px;top:89px;" width="12" height="12" viewBox="0 0 12 12"><path d="M2 6a4 4 0 1 0 2-3.5" stroke="#c0c0c0" stroke-width="2" fill="none"/></svg><div class="t" style="left:417px;top:88px;height:16px;line-height:16px;font-size:12px;color:#a8a8a8;">旋转</div><div class="a" style="left:449px;top:89px;width:1px;height:13px;background:#c0c0c0;"></div><svg class="a" style="left:455px;top:89px;" width="14" height="12" viewBox="0 0 14 12"><path d="M0 6h8M9 1v11M12 1v11" stroke="#c0c0c0" stroke-dasharray="2 1" fill="none"/></svg><div class="t" style="left:474px;top:88px;height:16px;line-height:16px;font-size:12px;color:#a8a8a8;">延伸</div><svg class="a" style="left:505px;top:89px;" width="14" height="12" viewBox="0 0 14 12"><path d="M0 6h14M5 0v12M8 0v12" stroke="#c0c0c0" fill="none"/></svg><div class="t" style="left:525px;top:88px;height:16px;line-height:16px;font-size:12px;color:#a8a8a8;">修剪</div><div class="a" style="left:557px;top:89px;width:1px;height:13px;background:#c0c0c0;"></div><svg class="a" style="left:562px;top:89px;" width="16" height="12" viewBox="0 0 16 12"><path d="M1 3h5M10 3h5M1 9h14M1 0v12" stroke="#c0c0c0" fill="none"/></svg><div class="t" style="left:582px;top:88px;height:16px;line-height:16px;font-size:12px;color:#a8a8a8;">打断</div><svg class="a" style="left:613px;top:89px;" width="16" height="12" viewBox="0 0 16 12"><path d="M1 3h5M10 3h5M1 9h14M1 0v12" stroke="#c0c0c0" fill="none"/></svg><div class="t" style="left:633px;top:88px;height:16px;line-height:16px;font-size:12px;color:#a8a8a8;">合并</div><svg class="a" style="left:663px;top:88px;" width="18" height="14" viewBox="0 0 18 14"><path d="M1 12h16M3 10l11-8" stroke="#c0c0c0" stroke-width="1.5" fill="none"/></svg><div class="t" style="left:684px;top:88px;height:16px;line-height:16px;font-size:12px;color:#a8a8a8;">分割</div><div class="a" style="left:716px;top:89px;width:1px;height:13px;background:#c0c0c0;"></div><svg class="a" style="left:722px;top:88px;" width="12" height="14" viewBox="0 0 12 14"><path d="M1 0v14h10M4 4h6M4 8h4" stroke="#c0c0c0" fill="none"/></svg><div class="t" style="left:740px;top:88px;height:16px;line-height:16px;font-size:12px;color:#a8a8a8;">对齐</div><svg class="a" style="left:768px;top:95px;" width="6" height="3" viewBox="0 0 6 3"><polygon points="0,0 6,0 3,3" fill="#a0a0a0"/></svg><svg class="a" style="left:781px;top:89px;" width="15" height="12" viewBox="0 0 15 12"><path d="M3 11a3 3 0 0 1 0-6 5 5 0 0 1 9 0 3 3 0 0 1 0 6z" fill="none" stroke="#c0c0c0" stroke-width="1.3"/></svg><div class="t" style="left:800px;top:88px;height:16px;line-height:16px;font-size:12px;color:#a8a8a8;">偏移</div><svg class="a" style="left:832px;top:88px;" width="12" height="14" viewBox="0 0 12 14"><path d="M1 1h6l4 4v8H1z" fill="none" stroke="#c0c0c0"/></svg><div class="t" style="left:851px;top:88px;height:16px;line-height:16px;font-size:12px;color:#a8a8a8;">拉伸</div><div class="a" style="left:882px;top:89px;width:1px;height:13px;background:#c0c0c0;"></div><svg class="a" style="left:887px;top:88px;" width="16" height="14" viewBox="0 0 16 14"><path d="M1 13h4M7 13h3M5 11l8-9" stroke="#b8b8b8" stroke-width="1.6" fill="none"/></svg><div class="t" style="left:909px;top:88px;height:16px;line-height:16px;font-size:12px;color:#a8a8a8;">设置夹点</div><div class="a" style="left:172px;top:111px;width:565px;height:26px;background:linear-gradient(#fbfbfb,#f3f3f3);border-radius:3px"></div><div class="a" style="left:174px;top:116px;width:2px;height:16px;background:repeating-linear-gradient(#9a9a9a 0 1px,transparent 1px 3px)"></div><div class="a" style="left:179px;top:112px;width:57px;height:24px;background:#fff;"></div><div class="a" style="left:225px;top:113px;width:11px;height:22px;background:#f0f0f0;"></div><div class="t" style="left:181px;top:116px;height:16px;line-height:16px;font-size:12px;color:#000;">第6层</div><svg class="a" style="left:227px;top:123px;" width="6" height="3" viewBox="0 0 6 3"><polygon points="0,0 6,0 3,3" fill="#000"/></svg><div class="a" style="left:239px;top:112px;width:69px;height:24px;background:#fff;"></div><div class="a" style="left:297px;top:113px;width:11px;height:22px;background:#f0f0f0;"></div><div class="t" style="left:241px;top:116px;height:16px;line-height:16px;font-size:12px;color:#000;">自定义</div><svg class="a" style="left:299px;top:123px;" width="6" height="3" viewBox="0 0 6 3"><polygon points="0,0 6,0 3,3" fill="#000"/></svg><div class="a" style="left:311px;top:112px;width:69px;height:24px;background:#fff;"></div><div class="a" style="left:369px;top:113px;width:11px;height:22px;background:#f0f0f0;"></div><div class="t" style="left:313px;top:116px;height:16px;line-height:16px;font-size:12px;color:#000;">自定义线</div><svg class="a" style="left:371px;top:123px;" width="6" height="3" viewBox="0 0 6 3"><polygon points="0,0 6,0 3,3" fill="#000"/></svg><div class="a" style="left:382px;top:112px;width:71px;height:24px;background:#fff;"></div><div class="a" style="left:442px;top:113px;width:11px;height:22px;background:#f0f0f0;"></div><div class="t" style="left:384px;top:116px;height:16px;line-height:16px;font-size:12px;color:#000;">ZDYX-81</div><svg class="a" style="left:444px;top:123px;" width="6" height="3" viewBox="0 0 6 3"><polygon points="0,0 6,0 3,3" fill="#000"/></svg><div class="a" style="left:457px;top:115px;width:1px;height:18px;background:#c0c0c0;"></div><svg class="a" style="left:464px;top:116px;" width="16" height="15" viewBox="0 0 16 15"><rect x="0.5" y="2.5" width="15" height="12" fill="#f4c860" stroke="#b08030"/><rect x="3" y="0.5" width="10" height="6" fill="#fff" stroke="#b08030"/><path d="M4 9h8" stroke="#a06020" stroke-width="2"/></svg><div class="t" style="left:483px;top:116px;height:16px;line-height:16px;font-size:12px;color:#000;">属性</div><div class="a" style="left:511px;top:113px;width:75px;height:23px;background:#d8e6f5;border:1px solid #3d8ad4"></div><svg class="a" style="left:514px;top:117px;" width="17" height="13" viewBox="0 0 17 13"><path d="M1 10c3-3 6-3 14-9" stroke="#303030" stroke-width="1.5" fill="none"/><path d="M1 12h15" stroke="#303030"/><path d="M12 2l4 3" stroke="#e08020" stroke-width="2"/></svg><div class="t" style="left:534px;top:116px;height:16px;line-height:16px;font-size:12px;color:#000;">编辑钢筋</div><svg class="a" style="left:590px;top:116px;" width="16" height="15" viewBox="0 0 16 15"><rect x="8.5" y="0.5" width="7" height="14" fill="#fff" stroke="#404040"/><path d="M0 2h3M0 6h3M0 10h3M0 14h3" stroke="#404040" stroke-dasharray="1 1"/><path d="M10 4h4M10 7h4M10 10h4" stroke="#404040"/></svg><div class="t" style="left:609px;top:116px;height:16px;line-height:16px;font-size:12px;color:#000;">构件列表</div><svg class="a" style="left:666px;top:116px;" width="15" height="16" viewBox="0 0 15 16"><path d="M1 15l8-8" stroke="#2060c0" stroke-width="2.5"/><path d="M7 3l5 5" stroke="#2060c0" stroke-width="4"/><circle cx="12" cy="3.5" r="2.5" fill="#2060c0"/></svg><div class="t" style="left:684px;top:116px;height:16px;line-height:16px;font-size:12px;color:#000;">拾取构件</div><div class="a" style="left:812px;top:111px;width:421px;height:26px;background:linear-gradient(#fbfbfb,#f3f3f3);border-radius:3px"></div><div class="a" style="left:814px;top:116px;width:2px;height:16px;background:repeating-linear-gradient(#9a9a9a 0 1px,transparent 1px 3px)"></div><svg class="a" style="left:821px;top:116px;" width="16" height="16" viewBox="0 0 16 16"><path d="M4.5 0v16M11.5 0v16M0 5.5h16M0 11.5h16" stroke="#404890" stroke-width="1"/><path d="M1 15L15 1" stroke="#e02020" stroke-width="1"/><circle cx="3.5" cy="12.5" r="2" fill="#3a8a2a"/><circle cx="11.5" cy="4" r="2" fill="#3a8a2a"/></svg><div class="t" style="left:841px;top:116px;height:16px;line-height:16px;font-size:12px;color:#000;">两点</div><svg class="a" style="left:872px;top:116px;" width="16" height="16" viewBox="0 0 16 16"><path d="M3.5 0v16M11.5 0v16M0 11.5h16" stroke="#404890" stroke-width="1.2"/><path d="M0 6.5h16" stroke="#c02030" stroke-width="1.2"/></svg><div class="t" style="left:892px;top:116px;height:16px;line-height:16px;font-size:12px;color:#000;">平行</div><svg class="a" style="left:922px;top:116px;" width="17" height="16" viewBox="0 0 17 16"><path d="M4.5 0v16M11.5 0v16M0 5.5h14M0 11.5h14" stroke="#404890" stroke-width="1"/><path d="M1 15L15 1" stroke="#e02020" stroke-width="1"/><ellipse cx="14.5" cy="11" rx="1.6" ry="2.4" fill="none" stroke="#e02020" stroke-width="1.2"/></svg><div class="t" style="left:943px;top:116px;height:16px;line-height:16px;font-size:12px;color:#000;">点角</div><svg class="a" style="left:973px;top:123px;" width="6" height="3" viewBox="0 0 6 3"><polygon points="0,0 6,0 3,3" fill="#000"/></svg><svg class="a" style="left:985px;top:116px;" width="16" height="16" viewBox="0 0 16 16"><path d="M2 14c0-7 5-11 11-11" stroke="#c02030" stroke-width="1.3" fill="none"/><circle cx="2.5" cy="13" r="1.8" fill="#fff" stroke="#c02030"/><circle cx="13" cy="3" r="1.8" fill="#fff" stroke="#c02030"/><path d="M7.5 3v13M0 8.5h16" stroke="#404890" stroke-width="1"/></svg><div class="t" style="left:1006px;top:116px;height:16px;line-height:16px;font-size:12px;color:#000;">三点辅轴</div><svg class="a" style="left:1060px;top:123px;" width="6" height="3" viewBox="0 0 6 3"><polygon points="0,0 6,0 3,3" fill="#000"/></svg><svg class="a" style="left:1073px;top:116px;" width="17" height="15" viewBox="0 0 17 15"><path d="M1 14h15" stroke="#3050a0" stroke-width="1.5"/><path d="M4 12l10-10" stroke="#8060c0" stroke-width="3"/></svg><div class="t" style="left:1092px;top:116px;height:16px;line-height:16px;font-size:12px;color:#000;">删除辅轴</div><svg class="a" style="left:1148px;top:116px;" width="17" height="16" viewBox="0 0 17 16"><path d="M1 10v6M16 10v6M1 13h15" stroke="#303030"/><rect x="13" y="0" width="3" height="3" fill="#20b040"/><rect x="3" y="6" width="3" height="3" fill="#20b040"/></svg><div class="t" style="left:1168px;top:116px;height:16px;line-height:16px;font-size:12px;color:#000;">尺寸标注</div><svg class="a" style="left:1222px;top:123px;" width="6" height="3" viewBox="0 0 6 3"><polygon points="0,0 6,0 3,3" fill="#000"/></svg><div class="a" style="left:1305px;top:140px;width:30px;height:25px;background:linear-gradient(#fbfbfb,#f3f3f3);border-radius:3px"></div><div class="a" style="left:1307px;top:145px;width:2px;height:15px;background:repeating-linear-gradient(#9a9a9a 0 1px,transparent 1px 3px)"></div><div class="a" style="left:172px;top:140px;width:451px;height:26px;background:linear-gradient(#fbfbfb,#f3f3f3);border-radius:3px"></div><div class="a" style="left:174px;top:145px;width:2px;height:16px;background:repeating-linear-gradient(#9a9a9a 0 1px,transparent 1px 3px)"></div><svg class="a" style="left:184px;top:146px;" width="10" height="14" viewBox="0 0 10 14"><path d="M1 1v11l3-3 2 4 2-1-2-4h4z" fill="#fff" stroke="#4060a0"/></svg><div class="t" style="left:200px;top:145px;height:16px;line-height:16px;font-size:12px;color:#000;">选择</div><svg class="a" style="left:232px;top:152px;" width="6" height="3" viewBox="0 0 6 3"><polygon points="0,0 6,0 3,3" fill="#000"/></svg><div class="a" style="left:245px;top:144px;width:1px;height:18px;background:#c0c0c0;"></div><svg class="a" style="left:252px;top:146px;" width="14" height="14" viewBox="0 0 14 14"><path d="M1 1l11 11" stroke="#2050a0" stroke-width="1.8"/><path d="M6 13h7V6" stroke="#2050a0" stroke-width="1.8" fill="none"/></svg><div class="t" style="left:270px;top:145px;height:16px;line-height:16px;font-size:12px;color:#000;">直线</div><svg class="a" style="left:302px;top:144px;" width="16" height="17" viewBox="0 0 16 17"><circle cx="8" cy="9.5" r="6.5" fill="none" stroke="#2050a0" stroke-width="1.5"/><path d="M8 6v7M4.5 9.5h7" stroke="#2050a0"/><rect x="12" y="1" width="3" height="3" fill="#d04040"/></svg><div class="t" style="left:321px;top:145px;height:16px;line-height:16px;font-size:12px;color:#000;">点加长度</div><svg class="a" style="left:377px;top:146px;" width="14" height="14" viewBox="0 0 14 14"><circle cx="7" cy="7" r="6" fill="#c8dcf4" stroke="#2050a0" stroke-width="1.3"/><circle cx="7" cy="7" r="1.5" fill="#2050a0"/></svg><div class="t" style="left:396px;top:145px;height:16px;line-height:16px;font-size:12px;color:#000;">圆</div><svg class="a" style="left:414px;top:152px;" width="6" height="3" viewBox="0 0 6 3"><polygon points="0,0 6,0 3,3" fill="#000"/></svg><div class="a" style="left:426px;top:141px;width:54px;height:24px;background:#fff;"></div><svg class="a" style="left:471px;top:152px;" width="6" height="3" viewBox="0 0 6 3"><polygon points="0,0 6,0 3,3" fill="#000"/></svg><svg class="a" style="left:486px;top:147px;" width="15" height="12" viewBox="0 0 15 12"><rect x="0.5" y="0.5" width="14" height="11" fill="#a8c8f0" stroke="#3050a0"/></svg><div class="t" style="left:505px;top:145px;height:16px;line-height:16px;font-size:12px;color:#000;">矩形</div><div class="a" style="left:537px;top:144px;width:1px;height:18px;background:#c0c0c0;"></div><svg class="a" style="left:542px;top:145px;" width="16" height="16" viewBox="0 0 16 16"><rect x="0.5" y="0.5" width="15" height="15" fill="none" stroke="#404040" stroke-dasharray="2 1"/><path d="M4 8h8M8 4v8" stroke="#404040"/><rect x="3" y="3" width="2" height="2" fill="#404040"/><rect x="11" y="11" width="2" height="2" fill="#404040"/></svg><div class="t" style="left:562px;top:145px;height:16px;line-height:16px;font-size:12px;color:#000;">智能布置</div><svg class="a" style="left:613px;top:152px;" width="6" height="3" viewBox="0 0 6 3"><polygon points="0,0 6,0 3,3" fill="#000"/></svg><svg class="a" style="left:170px;top:168px;overflow:hidden" width="1196" height="307" viewBox="170 168 1196 307">
<rect x="170" y="168" width="1196" height="307" fill="#000"/>
<g stroke="#a80000" stroke-width="1" fill="none" shape-rendering="crispEdges">
<line x1="170" y1="271" x2="1366" y2="346.5"/>
<line x1="214" y1="168" x2="291" y2="475"/>
<line x1="580" y1="168" x2="658" y2="475"/>
<line x1="653" y1="168" x2="731" y2="475"/>
<line x1="762" y1="168" x2="839" y2="475"/>
<line x1="800" y1="168" x2="876" y2="475"/>
<line x1="140" y1="300" x2="180" y2="475"/>
</g>
<g stroke="#f00000" stroke-width="1" fill="none" shape-rendering="crispEdges">
<line x1="433" y1="168" x2="512" y2="475"/>
<line x1="836" y1="168" x2="913" y2="475"/>
<line x1="1244" y1="168" x2="1316" y2="475"/>
</g>
<!-- axis circles -->
<g fill="none" stroke="#00a000" stroke-width="1" shape-rendering="crispEdges">
<circle cx="436.5" cy="181" r="13"/>
<circle cx="839.5" cy="181" r="13"/>
<circle cx="1236" cy="181" r="13"/>
</g>
<!-- left green beam -->
<polygon points="140,288 381,304 371,376 140,363.5" fill="#00a800"/>
<polygon points="140,288 378,304 376,317 140,302" fill="#00e000"/>
<!-- left gray block -->
<polygon points="140,302 268,311 266.6,346 262,385.5 140,380" fill="#b4b4b4"/>
<polygon points="140,302 268,311 268,321 140,316" fill="#dcdcdc"/>
<!-- big gray block -->
<polygon points="363,376 372,376 355,475 346,475" fill="#787878"/>
<polygon points="377.3,304.2 602.6,318.2 602.5,331.4 578,475 352,475 369,376 378.5,317.5" fill="#8a8a8a"/>
<polygon points="377.3,304.2 602.6,318.2 601.8,331.9 376.4,317.3" fill="#b0b0b0"/>
<!-- middle green beam -->
<polygon points="599.1,317.2 1000,343.2 1000,422 590.9,397.5 601.5,332" fill="#006200"/>
<polygon points="599.1,317.2 1000,343.2 1000,358.5 602.6,332.8" fill="#006e00"/>
<!-- column dark part -->
<polygon points="922,168 950,168 1025,475 997.7,475" fill="#00a000"/>
<!-- middle gray beam -->
<polygon points="617,333.4 994,358 993.8,380.8 984.5,401.7 613.7,377.5" fill="#b4b4b4"/>
<polygon points="617,333.4 994,358 993.8,380.8 621.9,355.6" fill="#e6e6e6"/>
<polygon points="616.9,333.4 622,357 614.3,377.7 611,363.4" fill="#a0a0a0"/>
<!-- right beam dark green -->
<polygon points="1010,356 1366,379 1366,447.5 1043.8,426.7" fill="#005800"/>
<!-- column bright part -->
<polygon points="950,168 980.3,168 1055.3,475 1025,475" fill="#00e000"/>
<!-- right gray beam -->
<polygon points="1016,300 1366,322.5 1366,378.8 1011.8,355.4" fill="#b4b4b4"/>
<polygon points="1016,300 1366,322.5 1366,360 1025,343.7" fill="#e6e6e6"/>
<polygon points="1016,300 1025,343.7 1025,355.5 1011.8,355.4 1008.9,346.6" fill="#b8b8b8"/>
<polygon points="1016,301 1011.5,346 1024,346" fill="#959595"/>
<!-- top right gray block -->
<polygon points="1238.3,168 1366,168 1366,175 1231,212.5" fill="#b4b4b4"/>
<polygon points="1238.3,168 1277,168 1274,186 1237,181" fill="#e6e6e6"/>
<!-- rebar cage -->
<g fill="none" shape-rendering="auto">
<polygon points="737.7,386 928.8,398.6 924.5,418.8 734.3,406.2" fill="#005400" stroke="#80e080" stroke-width="1"/>
<line x1="739" y1="392" x2="927" y2="404.5" stroke="#80e080"/>
<line x1="736" y1="402" x2="925" y2="414.5" stroke="#70c870"/>
<path d="M741.5 386.3L738.1 406.5M744.5 386.8L741.1 407.0" stroke="#80e080"/>
<path d="M738.1 406.5L738.7 421.9M741.1 406.5L741.7 421.9" stroke="#c0a8a0"/>
<path d="M759.9 387.5L756.4 407.7M762.9 388.0L759.4 408.2" stroke="#80e080"/>
<path d="M756.4 407.7L756.6 423.2M759.4 407.7L759.6 423.2" stroke="#c0a8a0"/>
<path d="M778.2 388.7L774.6 408.9M781.2 389.2L777.6 409.4" stroke="#80e080"/>
<path d="M774.6 408.9L774.4 424.4M777.6 408.9L777.4 424.4" stroke="#c0a8a0"/>
<path d="M796.6 389.9L792.9 410.1M799.6 390.4L795.9 410.6" stroke="#80e080"/>
<path d="M792.9 410.1L792.3 425.7M795.9 410.1L795.3 425.7" stroke="#c0a8a0"/>
<path d="M814.9 391.1L811.1 411.3M817.9 391.6L814.1 411.8" stroke="#80e080"/>
<path d="M811.1 411.3L810.1 427.0M814.1 411.3L813.1 427.0" stroke="#c0a8a0"/>
<path d="M833.2 392.3L829.4 412.5M836.2 392.8L832.4 413.0" stroke="#80e080"/>
<path d="M829.4 412.5L828.0 428.3M832.4 412.5L831.0 428.3" stroke="#c0a8a0"/>
<path d="M851.6 393.5L847.7 413.7M854.6 394.0L850.7 414.2" stroke="#80e080"/>
<path d="M847.7 413.7L845.9 429.6M850.7 413.7L848.9 429.6" stroke="#c0a8a0"/>
<path d="M869.9 394.7L865.9 414.9M872.9 395.2L868.9 415.4" stroke="#80e080"/>
<path d="M865.9 414.9L863.7 430.9M868.9 414.9L866.7 430.9" stroke="#c0a8a0"/>
<path d="M888.3 395.9L884.2 416.1M891.3 396.4L887.2 416.6" stroke="#80e080"/>
<path d="M884.2 416.1L881.6 432.2M887.2 416.1L884.6 432.2" stroke="#c0a8a0"/>
<path d="M906.6 397.1L902.4 417.3M909.6 397.6L905.4 417.8" stroke="#80e080"/>
<path d="M902.4 417.3L899.4 433.4M905.4 417.3L902.4 433.4" stroke="#c0a8a0"/>
<path d="M925.0 398.3L920.7 418.5M928.0 398.8L923.7 419.0" stroke="#80e080"/>
<path d="M920.7 418.5L917.3 434.7M923.7 418.5L920.3 434.7" stroke="#c0a8a0"/>
<polyline points="733.5,407 736,425.6 922,439 925.4,418.8" stroke="#fff" stroke-width="2"/>
<line x1="740" y1="414.6" x2="918" y2="424.7" stroke="#fff" stroke-width="2"/>
<line x1="738.5" y1="420.5" x2="918.6" y2="432.3" stroke="#c0a8a0"/>
</g>
<!-- gizmo -->
<g fill="none" stroke="#a8a8a8" stroke-width="1" shape-rendering="auto">
<circle cx="767" cy="321" r="136"/>
<circle cx="767" cy="185" r="8.5"/>
<circle cx="767" cy="457" r="8.5"/>
<circle cx="631" cy="321.5" r="8.5"/>
<circle cx="903" cy="321.5" r="8.5"/>
</g>
<text x="436.5" y="186.5" font-size="12" fill="#d8d8d8" text-anchor="middle" font-family="Liberation Sans">5</text>
<text x="840" y="186.5" font-size="12" fill="#d8d8d8" text-anchor="middle" font-family="Liberation Sans">6</text>
<!-- axis indicator -->
<g shape-rendering="auto">
<line x1="225" y1="425" x2="263" y2="427.5" stroke="#ff1010" stroke-width="3.6"/>
<polygon points="261,423 273,428 261,432.5" fill="#ff1010"/>
<line x1="223" y1="422" x2="218.5" y2="403" stroke="#10e010" stroke-width="3"/>
<polygon points="216,404.5 218.5,399 223,404" fill="#10e010"/>
<line x1="225" y1="425" x2="231" y2="393" stroke="#2088ff" stroke-width="3"/>
<polygon points="226,395 232.5,382.5 235,395" fill="#2088ff"/>
<path d="M220 377.5h9l-9 9h9" stroke="#2088ff" stroke-width="1" fill="none"/>
<path d="M231.5 400.5l3 4 3.5-4.5M234.5 404.5v5" stroke="#10e010" stroke-width="1" fill="none"/>
<path d="M259 414l10 10M269 414l-10 10" stroke="#ff1010" stroke-width="1" fill="none"/>
</g>
</svg>
<div class="a" style="left:180px;top:171px;width:167px;height:177px;background:#fff;border-right:1px solid #a0a0a0;border-bottom:1px solid #a0a0a0"></div><div class="t" style="left:188px;top:177px;height:16px;line-height:16px;font-size:12px;color:#a6a6a6;">钢筋显示控制面板</div><div class="a" style="left:181px;top:201px;width:165px;height:146px;border:1px solid #9aa0a8;border-right-color:#c8c8c8;border-bottom-color:#c8c8c8;background:#fff"></div><svg class="a" style="left:185px;top:205px" width="11" height="11" viewBox="0 0 11 11"><rect x="0.5" y="0.5" width="10" height="10" fill="#fff" stroke="#8a8a8a"/><path d="M2 5.5l2.2 2.2L9 3" stroke="#202020" stroke-width="1.2" fill="none"/></svg><div class="t" style="left:200px;top:202px;line-height:16px;font-size:12px;color:#000">水平纵筋</div><svg class="a" style="left:185px;top:217px" width="11" height="11" viewBox="0 0 11 11"><rect x="0.5" y="0.5" width="10" height="10" fill="#fff" stroke="#8a8a8a"/><path d="M2 5.5l2.2 2.2L9 3" stroke="#202020" stroke-width="1.2" fill="none"/></svg><div class="t" style="left:200px;top:214px;line-height:16px;font-size:12px;color:#000">横向钢筋</div><svg class="a" style="left:185px;top:229px" width="11" height="11" viewBox="0 0 11 11"><rect x="0.5" y="0.5" width="10" height="10" fill="#fff" stroke="#8a8a8a"/><path d="M2 5.5l2.2 2.2L9 3" stroke="#202020" stroke-width="1.2" fill="none"/></svg><div class="t" style="left:200px;top:226px;line-height:16px;font-size:12px;color:#000">显示其它图元</div><svg class="a" style="left:185px;top:241px" width="11" height="11" viewBox="0 0 11 11"><rect x="0.5" y="0.5" width="10" height="10" fill="#fff" stroke="#8a8a8a"/><path d="M2 5.5l2.2 2.2L9 3" stroke="#202020" stroke-width="1.2" fill="none"/></svg><div class="t" style="left:200px;top:238px;line-height:16px;font-size:12px;color:#000">显示详细公式</div><div class="a" style="left:170px;top:475px;width:1196px;height:31px;background:#f0f0f0;"></div><div class="a" style="left:172px;top:478px;width:207px;height:26px;background:linear-gradient(#fbfbfb,#f3f3f3);border-radius:3px"></div><div class="a" style="left:174px;top:483px;width:2px;height:16px;background:repeating-linear-gradient(#9a9a9a 0 1px,transparent 1px 3px)"></div><svg class="a" style="left:182px;top:482px;" width="16" height="18" viewBox="0 0 16 18"><path d="M1 2h14M5 2v15" stroke="#e08080" stroke-width="3"/><path d="M9 9l5 5" stroke="#4060a0" stroke-width="1.5"/><circle cx="10" cy="10" r="2" fill="none" stroke="#4060a0"/></svg><div class="t" style="left:201px;top:482px;height:16px;line-height:16px;font-size:12px;color:#000;">正交</div><div class="a" style="left:229px;top:478px;width:75px;height:23px;background:#d8e6f5;border:1px solid #3d8ad4"></div><svg class="a" style="left:233px;top:481px;" width="17" height="17" viewBox="0 0 17 17"><path d="M2 0v6M12 0v6" stroke="#806020" stroke-width="1.5"/><rect x="3" y="6" width="13" height="10" rx="3" fill="#e0b040" stroke="#806020"/></svg><div class="t" style="left:252px;top:482px;height:16px;line-height:16px;font-size:12px;color:#000;">对象捕捉</div><svg class="a" style="left:305px;top:482px;" width="17" height="16" viewBox="0 0 17 16"><rect x="0.5" y="0.5" width="16" height="15" fill="#fff" stroke="#404040"/><path d="M0.5 4h16" stroke="#404040" stroke-width="2"/><text x="8.5" y="13" font-size="7" text-anchor="middle" font-family="Liberation Sans">12</text></svg><div class="t" style="left:327px;top:482px;height:16px;line-height:16px;font-size:12px;color:#000;">动态输入</div><div class="a" style="left:381px;top:478px;width:263px;height:26px;background:linear-gradient(#fbfbfb,#f3f3f3);border-radius:3px"></div><div class="a" style="left:384px;top:483px;width:2px;height:16px;background:repeating-linear-gradient(#9a9a9a 0 1px,transparent 1px 3px)"></div><svg class="a" style="left:392px;top:483px;" width="14" height="14" viewBox="0 0 14 14"><path d="M1 1l12 12M13 1L1 13" stroke="#2050a0" stroke-width="1.8"/></svg><div class="t" style="left:412px;top:482px;height:16px;line-height:16px;font-size:12px;color:#000;">交点</div><div class="a" style="left:440px;top:478px;width:51px;height:23px;background:#d8e6f5;border:1px solid #3d8ad4"></div><div class="a" style="left:490px;top:478px;width:52px;height:23px;background:#d8e6f5;border:1px solid #3d8ad4"></div><svg class="a" style="left:444px;top:482px;" width="16" height="15" viewBox="0 0 16 15"><path d="M0 13h15M10 0v13" stroke="#2050a0" stroke-width="1.5"/><rect x="8.5" y="11.5" width="3" height="3" fill="#2050a0"/></svg><div class="t" style="left:463px;top:482px;height:16px;line-height:16px;font-size:12px;color:#000;">垂点</div><svg class="a" style="left:494px;top:482px;" width="16" height="15" viewBox="0 0 16 15"><path d="M0 8h15" stroke="#2050a0" stroke-width="1.5"/><rect x="6" y="6" width="4" height="4" fill="#2050a0"/></svg><div class="t" style="left:514px;top:482px;height:16px;line-height:16px;font-size:12px;color:#000;">中点</div><svg class="a" style="left:546px;top:482px;" width="15" height="15" viewBox="0 0 15 15"><polygon points="7.5,1 14,6 11.5,14 3.5,14 1,6" fill="none" stroke="#2050a0" stroke-width="1.5"/></svg><div class="t" style="left:564px;top:482px;height:16px;line-height:16px;font-size:12px;color:#000;">顶点</div><svg class="a" style="left:596px;top:481px;" width="17" height="17" viewBox="0 0 17 17"><path d="M3 2v13h13" stroke="#2060c0" stroke-width="1.8" fill="none"/><path d="M3 15l11-11" stroke="#2060c0" stroke-width="1.5"/><rect x="1" y="0" width="3" height="3" fill="#404040"/><rect x="13" y="2" width="3" height="3" fill="#404040"/></svg><div class="t" style="left:616px;top:482px;height:16px;line-height:16px;font-size:12px;color:#000;">坐标</div><div class="a" style="left:170px;top:506px;width:12px;height:200px;background:#f0f0f0;"></div><svg class="a" style="left:171px;top:506px;" width="11" height="11" viewBox="0 0 11 11"><rect x="0.5" y="0.5" width="10" height="10" fill="#f8e8e8" stroke="#804040"/><path d="M2 2l7 7M9 2l-7 7" stroke="#804040" stroke-width="1.3"/></svg><div class="a" style="left:171px;top:520px;width:10px;height:184px;background-image:radial-gradient(#b0b0b0 1.1px,transparent 1.3px);background-size:5px 5px"></div><div class="a" style="left:183px;top:508px;width:1183px;height:26px;background:linear-gradient(#f6f6f6,#fbfbfb);"></div><svg class="a" style="left:190px;top:513px;" width="8" height="12" viewBox="0 0 8 12"><path d="M1 0v12" stroke="#c0c0c0" stroke-width="2"/><polygon points="8,0 8,12 2,6" fill="#c8c8c8"/></svg><svg class="a" style="left:213px;top:513px;" width="7" height="12" viewBox="0 0 7 12"><polygon points="7,0 7,12 0,6" fill="#c8c8c8"/></svg><svg class="a" style="left:236px;top:513px;" width="7" height="12" viewBox="0 0 7 12"><polygon points="0,0 0,12 7,6" fill="#2a5ad0"/></svg><svg class="a" style="left:259px;top:513px;" width="11" height="12" viewBox="0 0 11 12"><polygon points="0,0 0,12 7,6" fill="#2a5ad0"/><path d="M9 0v12" stroke="#2a5ad0" stroke-width="2"/></svg><div class="a" style="left:280px;top:512px;width:1px;height:15px;background:#c0c0c0;"></div><svg class="a" style="left:288px;top:513px;" width="10" height="11" viewBox="0 0 10 11"><polygon points="5,0 10,5 7,5 7,11 3,11 3,5 0,5" fill="#c8c8c8"/></svg><svg class="a" style="left:311px;top:513px;" width="10" height="11" viewBox="0 0 10 11"><polygon points="5,11 10,6 7,6 7,0 3,0 3,6 0,6" fill="#2a5ad0"/></svg><div class="a" style="left:332px;top:512px;width:1px;height:15px;background:#c0c0c0;"></div><svg class="a" style="left:336px;top:511px;" width="17" height="15" viewBox="0 0 17 15"><path d="M1 1h4M1 14h4M1 1v13" stroke="#b8b8b8" fill="none"/><rect x="7" y="5" width="9" height="5" fill="none" stroke="#b8b8b8"/></svg><div class="t" style="left:357px;top:511px;height:16px;line-height:16px;font-size:12px;color:#a8a8a8;">插入</div><svg class="a" style="left:387px;top:511px;" width="17" height="15" viewBox="0 0 17 15"><path d="M1 2h8M1 7h8M1 12h8" stroke="#b8b8b8" stroke-width="2"/><path d="M11 7h5" stroke="#b8b8b8"/></svg><div class="t" style="left:408px;top:511px;height:16px;line-height:16px;font-size:12px;color:#a8a8a8;">删除</div><svg class="a" style="left:441px;top:511px;" width="13" height="15" viewBox="0 0 13 15"><path d="M1 1v14M4 4v11M7 7v8M10 10v5" stroke="#b8b8b8" stroke-dasharray="1 1"/></svg><div class="t" style="left:459px;top:511px;height:16px;line-height:16px;font-size:12px;color:#a8a8a8;">缩尺配筋</div><svg class="a" style="left:514px;top:511px;" width="17" height="16" viewBox="0 0 17 16"><rect x="3" y="5" width="13" height="10" fill="#fff" stroke="#404060"/><path d="M1 13l11-12" stroke="#e0a020" stroke-width="2.5"/><path d="M6 9h7" stroke="#3060c0" stroke-width="1.5"/></svg><div class="t" style="left:534px;top:511px;height:16px;line-height:16px;font-size:12px;color:#000;">钢筋信息</div><svg class="a" style="left:589px;top:511px;" width="15" height="14" viewBox="0 0 15 14"><rect x="0.5" y="0.5" width="14" height="13" fill="#fff" stroke="#3060a0"/><rect x="0.5" y="0.5" width="14" height="3" fill="#3060a0"/><path d="M3 7h9M3 10h6" stroke="#c04040"/></svg><div class="t" style="left:609px;top:511px;height:16px;line-height:16px;font-size:12px;color:#000;">钢筋图库</div><svg class="a" style="left:664px;top:511px;" width="17" height="15" viewBox="0 0 17 15"><rect x="0.5" y="0.5" width="11" height="14" fill="#fff" stroke="#4060a0"/><path d="M5 7h8M10 3l5 4-5 4z" stroke="#2a6ad0" fill="#2a6ad0"/></svg><div class="t" style="left:684px;top:511px;height:16px;line-height:16px;font-size:12px;color:#000;">其他</div><svg class="a" style="left:710px;top:518px;" width="6" height="3" viewBox="0 0 6 3"><polygon points="0,0 6,0 3,3" fill="#000"/></svg><div class="t" style="left:725px;top:511px;height:16px;line-height:16px;font-size:12px;color:#000;">关闭</div><div class="a" style="left:757px;top:512px;width:1px;height:15px;background:#c0c0c0;"></div><div class="t" style="left:764px;top:511px;height:16px;line-height:16px;font-size:12px;color:#000;">单构件钢筋总重(kg)：9.085</div><div class="a" style="left:182px;top:534px;width:1184px;height:171px;background:#fff;border:1px solid #a0a0a0"></div><div class="a" style="left:183px;top:535px;width:1164px;height:152px;overflow:hidden"><div class="a" style="left:0px;top:0px;width:1200px;height:18px;background:linear-gradient(#ffffff,#ececec);"></div><div class="a" style="left:106.5px;top:0px;width:55.5px;height:18px;background:linear-gradient(#fbe0b0,#f5c878);"></div><div class="t" style="left:0px;top:1px;width:33px;text-align:center;line-height:16px;font-size:12px;color:#000;"></div><div class="t" style="left:33px;top:1px;width:73.5px;text-align:center;line-height:16px;font-size:12px;color:#000;">筋号</div><div class="t" style="left:106.5px;top:1px;width:55.5px;text-align:center;line-height:16px;font-size:12px;color:#5a1a8a;">直径(㎜)</div><div class="t" style="left:162px;top:1px;width:36.5px;text-align:center;line-height:16px;font-size:12px;color:#000;">级别</div><div class="t" style="left:198.5px;top:1px;width:33.0px;text-align:center;line-height:16px;font-size:12px;color:#000;">图号</div><div class="t" style="left:231.5px;top:1px;width:201.0px;text-align:center;line-height:16px;font-size:12px;color:#000;">图形</div><div class="t" style="left:432.5px;top:1px;width:165.5px;text-align:center;line-height:16px;font-size:12px;color:#000;">计算公式</div><div class="t" style="left:598px;top:1px;width:156.5px;text-align:center;line-height:16px;font-size:12px;color:#000;">公式描述</div><div class="t" style="left:754.5px;top:1px;width:80.5px;text-align:center;line-height:16px;font-size:12px;color:#000;">弯曲调整(㎜)</div><div class="t" style="left:835px;top:1px;width:62px;text-align:center;line-height:16px;font-size:12px;color:#000;">长度(㎜)</div><div class="t" style="left:897px;top:1px;width:37.5px;text-align:center;line-height:16px;font-size:12px;color:#000;">根数</div><div class="t" style="left:934.5px;top:1px;width:38.5px;text-align:center;line-height:16px;font-size:12px;color:#000;">搭接</div><div class="t" style="left:973px;top:1px;width:49.5px;text-align:center;line-height:16px;font-size:12px;color:#000;">损耗(%)</div><div class="t" style="left:1022.5px;top:1px;width:61.0px;text-align:center;line-height:16px;font-size:12px;color:#000;">单重(㎏)</div><div class="t" style="left:1083.5px;top:1px;width:61.0px;text-align:center;line-height:16px;font-size:12px;color:#000;">总重(㎏)</div><div class="t" style="left:1144.5px;top:1px;width:72.5px;text-align:center;line-height:16px;font-size:12px;color:#000;">钢筋归类</div><div class="a" style="left:0px;top:18px;width:33px;height:61px;background:#fbd08c;"></div><div class="a" style="left:0px;top:79px;width:33px;height:58px;background:linear-gradient(90deg,#f4f4f4,#e8e8e8);"></div><div class="a" style="left:0px;top:137px;width:33px;height:20px;background:#fff;"></div><div class="a" style="left:33px;top:18px;width:1200px;height:119px;background:#ccfdd8;"></div><div class="a" style="left:106.5px;top:18px;width:55.5px;height:61px;background:#ace8d6;"></div><div class="a" style="left:33px;top:0px;width:1px;height:153px;background:#c0c0c0;"></div><div class="a" style="left:106px;top:0px;width:1px;height:153px;background:#c0c0c0;"></div><div class="a" style="left:162px;top:0px;width:1px;height:153px;background:#c0c0c0;"></div><div class="a" style="left:198px;top:0px;width:1px;height:153px;background:#c0c0c0;"></div><div class="a" style="left:231px;top:0px;width:1px;height:153px;background:#c0c0c0;"></div><div class="a" style="left:432px;top:0px;width:1px;height:153px;background:#c0c0c0;"></div><div class="a" style="left:598px;top:0px;width:1px;height:153px;background:#c0c0c0;"></div><div class="a" style="left:754px;top:0px;width:1px;height:153px;background:#c0c0c0;"></div><div class="a" style="left:835px;top:0px;width:1px;height:153px;background:#c0c0c0;"></div><div class="a" style="left:897px;top:0px;width:1px;height:153px;background:#c0c0c0;"></div><div class="a" style="left:934px;top:0px;width:1px;height:153px;background:#c0c0c0;"></div><div class="a" style="left:973px;top:0px;width:1px;height:153px;background:#c0c0c0;"></div><div class="a" style="left:1022px;top:0px;width:1px;height:153px;background:#c0c0c0;"></div><div class="a" style="left:1083px;top:0px;width:1px;height:153px;background:#c0c0c0;"></div><div class="a" style="left:1144px;top:0px;width:1px;height:153px;background:#c0c0c0;"></div><div class="a" style="left:0px;top:18px;width:1200px;height:1px;background:#c0c0c0;"></div><div class="a" style="left:0px;top:79px;width:1200px;height:1px;background:#c0c0c0;"></div><div class="a" style="left:0px;top:108px;width:1200px;height:1px;background:#c0c0c0;"></div><div class="a" style="left:0px;top:137px;width:1200px;height:1px;background:#c0c0c0;"></div><div class="a" style="left:106px;top:18px;width:1px;height:135px;background:#000;"></div><div class="t" style="left:0px;top:41px;width:33px;text-align:center;line-height:16px;font-size:12px;color:#5a1a8a;font-family:'Liberation Mono',monospace">1*</div><div class="t" style="left:10px;top:86px;line-height:16px;font-size:12px;color:#000;font-family:'Liberation Mono',monospace">2</div><div class="t" style="left:10px;top:115px;line-height:16px;font-size:12px;color:#000;font-family:'Liberation Mono',monospace">3</div><div class="t" style="left:10px;top:139px;line-height:16px;font-size:12px;color:#000;font-family:'Liberation Mono',monospace">4</div><div class="t" style="left:35px;top:41px;line-height:16px;font-size:12px;color:#000;">横向钢筋<span style="font-family:'Liberation Mono',monospace;font-size:11px;letter-spacing:-0.6px">.1</span></div><div class="t" style="left:108.5px;top:41px;line-height:16px;font-size:12px;color:#000;"><span style="font-family:'Liberation Mono',monospace;font-size:11px;letter-spacing:-0.6px">6</span></div><svg class="a" style="left:175px;top:45px" width="9" height="9" viewBox="0 0 9 9"><path d="M0.5 1.5h8v4h-8z M4.5 0v8" stroke="#000" fill="none"/></svg><div class="t" style="left:200.5px;top:41px;line-height:16px;font-size:12px;color:#000;"><span style="font-family:'Liberation Mono',monospace;font-size:11px;letter-spacing:-0.6px">0</span></div><div class="t" style="left:434.5px;top:41px;line-height:16px;font-size:12px;color:#000;"></div><div class="t" style="left:600px;top:41px;line-height:16px;font-size:12px;color:#000;">弯钩<span style="font-family:'Liberation Mono',monospace;font-size:11px;letter-spacing:-0.6px">+</span>端头<span style="font-family:'Liberation Mono',monospace;font-size:11px;letter-spacing:-0.6px">+</span>净长<span style="font-family:'Liberation Mono',monospace;font-size:11px;letter-spacing:-0.6px">+</span>端头<span style="font-family:'Liberation Mono',monospace;font-size:11px;letter-spacing:-0.6px">+</span>弯钩</div><div class="t" style="left:756.5px;top:41px;line-height:16px;font-size:12px;color:#000;"><span style="font-family:'Liberation Mono',monospace;font-size:11px;letter-spacing:-0.6px">(0)</span></div><div class="t" style="left:837px;top:41px;line-height:16px;font-size:12px;color:#000;"><span style="font-family:'Liberation Mono',monospace;font-size:11px;letter-spacing:-0.6px">1475</span></div><div class="t" style="left:899px;top:41px;line-height:16px;font-size:12px;color:#000;"><span style="font-family:'Liberation Mono',monospace;font-size:11px;letter-spacing:-0.6px">11</span></div><div class="t" style="left:936.5px;top:41px;line-height:16px;font-size:12px;color:#000;"><span style="font-family:'Liberation Mono',monospace;font-size:11px;letter-spacing:-0.6px">0</span></div><div class="t" style="left:975px;top:41px;line-height:16px;font-size:12px;color:#000;"><span style="font-family:'Liberation Mono',monospace;font-size:11px;letter-spacing:-0.6px">0</span></div><div class="t" style="left:1024.5px;top:41px;line-height:16px;font-size:12px;color:#000;"><span style="font-family:'Liberation Mono',monospace;font-size:11px;letter-spacing:-0.6px">0.384</span></div><div class="t" style="left:1085.5px;top:41px;line-height:16px;font-size:12px;color:#000;"><span style="font-family:'Liberation Mono',monospace;font-size:11px;letter-spacing:-0.6px">4.219</span></div><div class="t" style="left:1146.5px;top:41px;line-height:16px;font-size:12px;color:#000;">直筋</div><div class="t" style="left:35px;top:86px;line-height:16px;font-size:12px;color:#000;">水平纵筋<span style="font-family:'Liberation Mono',monospace;font-size:11px;letter-spacing:-0.6px">.1</span></div><div class="t" style="left:108.5px;top:86px;line-height:16px;font-size:12px;color:#000;"><span style="font-family:'Liberation Mono',monospace;font-size:11px;letter-spacing:-0.6px">12</span></div><svg class="a" style="left:175px;top:90px" width="9" height="9" viewBox="0 0 9 9"><path d="M0.5 1.5h8v4h-8z M4.5 0v7.5 M0 7.5h9" stroke="#000" fill="none"/></svg><div class="t" style="left:200.5px;top:86px;line-height:16px;font-size:12px;color:#000;"><span style="font-family:'Liberation Mono',monospace;font-size:11px;letter-spacing:-0.6px">1</span></div><div class="t" style="left:434.5px;top:86px;line-height:16px;font-size:12px;color:#000;"><span style="font-family:'Liberation Mono',monospace;font-size:11px;letter-spacing:-0.6px">1450</span></div><div class="t" style="left:600px;top:86px;line-height:16px;font-size:12px;color:#000;">净长</div><div class="t" style="left:756.5px;top:86px;line-height:16px;font-size:12px;color:#000;"><span style="font-family:'Liberation Mono',monospace;font-size:11px;letter-spacing:-0.6px">(0)</span></div><div class="t" style="left:837px;top:86px;line-height:16px;font-size:12px;color:#000;"><span style="font-family:'Liberation Mono',monospace;font-size:11px;letter-spacing:-0.6px">1450</span></div><div class="t" style="left:899px;top:86px;line-height:16px;font-size:12px;color:#000;"><span style="font-family:'Liberation Mono',monospace;font-size:11px;letter-spacing:-0.6px">2</span></div><div class="t" style="left:936.5px;top:86px;line-height:16px;font-size:12px;color:#000;"><span style="font-family:'Liberation Mono',monospace;font-size:11px;letter-spacing:-0.6px">0</span></div><div class="t" style="left:975px;top:86px;line-height:16px;font-size:12px;color:#000;"><span style="font-family:'Liberation Mono',monospace;font-size:11px;letter-spacing:-0.6px">0</span></div><div class="t" style="left:1024.5px;top:86px;line-height:16px;font-size:12px;color:#000;"><span style="font-family:'Liberation Mono',monospace;font-size:11px;letter-spacing:-0.6px">1.288</span></div><div class="t" style="left:1085.5px;top:86px;line-height:16px;font-size:12px;color:#000;"><span style="font-family:'Liberation Mono',monospace;font-size:11px;letter-spacing:-0.6px">2.575</span></div><div class="t" style="left:1146.5px;top:86px;line-height:16px;font-size:12px;color:#000;">直筋</div><div class="t" style="left:35px;top:115px;line-height:16px;font-size:12px;color:#000;">水平纵筋<span style="font-family:'Liberation Mono',monospace;font-size:11px;letter-spacing:-0.6px">.2</span></div><div class="t" style="left:108.5px;top:115px;line-height:16px;font-size:12px;color:#000;"><span style="font-family:'Liberation Mono',monospace;font-size:11px;letter-spacing:-0.6px">8</span></div><svg class="a" style="left:175px;top:119px" width="9" height="9" viewBox="0 0 9 9"><path d="M0.5 1.5h8v4h-8z M4.5 0v7.5 M0 7.5h9" stroke="#000" fill="none"/></svg><div class="t" style="left:200.5px;top:115px;line-height:16px;font-size:12px;color:#000;"><span style="font-family:'Liberation Mono',monospace;font-size:11px;letter-spacing:-0.6px">1</span></div><div class="t" style="left:434.5px;top:115px;line-height:16px;font-size:12px;color:#000;"><span style="font-family:'Liberation Mono',monospace;font-size:11px;letter-spacing:-0.6px">1450</span></div><div class="t" style="left:600px;top:115px;line-height:16px;font-size:12px;color:#000;">净长</div><div class="t" style="left:756.5px;top:115px;line-height:16px;font-size:12px;color:#000;"><span style="font-family:'Liberation Mono',monospace;font-size:11px;letter-spacing:-0.6px">(0)</span></div><div class="t" style="left:837px;top:115px;line-height:16px;font-size:12px;color:#000;"><span style="font-family:'Liberation Mono',monospace;font-size:11px;letter-spacing:-0.6px">1450</span></div><div class="t" style="left:899px;top:115px;line-height:16px;font-size:12px;color:#000;"><span style="font-family:'Liberation Mono',monospace;font-size:11px;letter-spacing:-0.6px">4</span></div><div class="t" style="left:936.5px;top:115px;line-height:16px;font-size:12px;color:#000;"><span style="font-family:'Liberation Mono',monospace;font-size:11px;letter-spacing:-0.6px">0</span></div><div class="t" style="left:975px;top:115px;line-height:16px;font-size:12px;color:#000;"><span style="font-family:'Liberation Mono',monospace;font-size:11px;letter-spacing:-0.6px">0</span></div><div class="t" style="left:1024.5px;top:115px;line-height:16px;font-size:12px;color:#000;"><span style="font-family:'Liberation Mono',monospace;font-size:11px;letter-spacing:-0.6px">0.573</span></div><div class="t" style="left:1085.5px;top:115px;line-height:16px;font-size:12px;color:#000;"><span style="font-family:'Liberation Mono',monospace;font-size:11px;letter-spacing:-0.6px">2.291</span></div><div class="t" style="left:1146.5px;top:115px;line-height:16px;font-size:12px;color:#000;">直筋</div><div class="t" style="left:434px;top:35px;line-height:16px;font-size:12px;color:#000;font-family:'Liberation Mono',monospace;letter-spacing:-0.6px;font-size:11px">6.25*d+39*d+800+39*d+6.25*</div><div class="t" style="left:434px;top:47px;line-height:16px;font-size:12px;color:#000;font-family:'Liberation Mono',monospace;letter-spacing:-0.6px;font-size:11px">d</div><div class="t" style="left:231.5px;top:83px;width:201.0px;text-align:center;line-height:16px;font-size:11px;color:#e00000;font-family:'Liberation Mono',monospace">1450</div><div class="a" style="left:255px;top:98px;width:150px;height:2px;background:#000;"></div><div class="t" style="left:231.5px;top:112px;width:201.0px;text-align:center;line-height:16px;font-size:11px;color:#e00000;font-family:'Liberation Mono',monospace">1450</div><div class="a" style="left:255px;top:127px;width:150px;height:2px;background:#000;"></div><svg class="a" style="left:316px;top:22px" width="40" height="60" viewBox="0 0 40 60"><path d="M10 5l3 3v33a4 4 0 0 0 8 0V8l-2-2" stroke="#000" stroke-width="2" fill="none"/></svg><div class="t" style="left:322px;top:57px;line-height:16px;font-size:12px;color:#000;"></div><div class="t" style="left:316px;top:22px;font-size:10px;line-height:10px;transform:rotate(-90deg);transform-origin:0 0;position:absolute;top:62px;font-family:'Liberation Mono',monospace">308625</div><div class="t" style="left:341px;top:22px;font-size:10px;line-height:10px;transform:rotate(-90deg);transform-origin:0 0;position:absolute;top:62px;font-family:'Liberation Mono',monospace">325300</div><div class="t" style="left:322px;top:66px;line-height:16px;font-size:11px;color:#000;font-family:'Liberation Mono',monospace">150</div></div><div class="a" style="left:183px;top:687px;width:1164px;height:17px;background:#f0f0f0;"></div><svg class="a" style="left:190px;top:691px;" width="6" height="9" viewBox="0 0 6 9"><path d="M5.5 0.5L1 4.5 5.5 8.5" stroke="#606060" stroke-width="1.4" fill="none"/></svg><div class="a" style="left:201px;top:688px;width:750px;height:15px;background:#cdcdcd;"></div><svg class="a" style="left:1336px;top:691px;" width="6" height="9" viewBox="0 0 6 9"><path d="M0.5 0.5L5 4.5 0.5 8.5" stroke="#606060" stroke-width="1.4" fill="none"/></svg><div class="a" style="left:1347px;top:535px;width:18px;height:152px;background:#f0f0f0;"></div><svg class="a" style="left:1351px;top:540px;" width="10" height="6" viewBox="0 0 10 6"><path d="M0.5 5.5L5 1 9.5 5.5" stroke="#606060" stroke-width="1.3" fill="none"/></svg><div class="a" style="left:1348px;top:552px;width:16px;height:46px;background:#cdcdcd;"></div><div class="a" style="left:1347px;top:687px;width:18px;height:17px;background:#f0f0f0;"></div><svg class="a" style="left:1351px;top:677px;" width="10" height="6" viewBox="0 0 10 6"><path d="M0.5 0.5L5 5 9.5 0.5" stroke="#606060" stroke-width="1.3" fill="none"/></svg><div class="a" style="left:0px;top:706px;width:1366px;height:22px;background:#f0f0f0;"></div><div class="a" style="left:0px;top:709px;width:147px;height:18px;border-top:1px solid #c8c8c8;border-left:1px solid #c8c8c8;border-right:1px solid #fff;border-bottom:1px solid #fff"></div><div class="a" style="left:148px;top:709px;width:79px;height:18px;border-top:1px solid #c8c8c8;border-left:1px solid #c8c8c8;border-right:1px solid #fff;border-bottom:1px solid #fff"></div><div class="a" style="left:228px;top:709px;width:99px;height:18px;border-top:1px solid #c8c8c8;border-left:1px solid #c8c8c8;border-right:1px solid #fff;border-bottom:1px solid #fff"></div><div class="a" style="left:328px;top:709px;width:49px;height:18px;border-top:1px solid #c8c8c8;border-left:1px solid #c8c8c8;border-right:1px solid #fff;border-bottom:1px solid #fff"></div><div class="a" style="left:378px;top:709px;width:915px;height:18px;border-top:1px solid #c8c8c8;border-left:1px solid #c8c8c8;border-right:1px solid #fff;border-bottom:1px solid #fff"></div><div class="a" style="left:1294px;top:709px;width:72px;height:18px;border-top:1px solid #c8c8c8;border-left:1px solid #c8c8c8;border-right:1px solid #fff;border-bottom:1px solid #fff"></div><div class="t" style="left:3px;top:710px;height:16px;line-height:16px;font-size:12px;color:#000;"><span style="font-family:'Liberation Mono',monospace;font-size:11px;letter-spacing:-0.6px">X=55350 Y=11781</span></div><div class="t" style="left:151px;top:710px;height:16px;line-height:16px;font-size:12.5px;color:#000;">层高<span style="font-family:'Liberation Mono',monospace;font-size:11px;letter-spacing:-0.6px">:2.8m</span></div><div class="t" style="left:231px;top:710px;height:16px;line-height:16px;font-size:12.5px;color:#000;">底标高<span style="font-family:'Liberation Mono',monospace;font-size:11px;letter-spacing:-0.6px">:17.55m</span></div><div class="t" style="left:332px;top:710px;height:16px;line-height:16px;font-size:12px;color:#000;"><span style="font-family:'Liberation Mono',monospace;font-size:11px;letter-spacing:-0.6px">1(1)</span></div><div class="t" style="left:1297px;top:710px;height:16px;line-height:16px;font-size:12px;color:#000;"><span style="font-family:'Liberation Mono',monospace;font-size:11px;letter-spacing:-0.6px">287.2 FPS</span></div><div class="a" style="left:0px;top:728px;width:1366px;height:40px;background:#050a10;"></div><svg class="a" style="left:16px;top:740px;" width="17" height="17" viewBox="0 0 17 17"><path d="M0 2.5l7-1v6.5H0zM8 1.3l9-1.3v8H8zM0 9h7v6.5l-7-1zM8 9h9v8l-9-1.3z" fill="#fff"/></svg><div class="a" style="left:48px;top:728px;width:344px;height:40px;background:#2f2f2f;"></div><svg class="a" style="left:57px;top:737px;" width="22" height="22" viewBox="0 0 22 22"><circle cx="11" cy="11" r="9" fill="none" stroke="#fff" stroke-width="2.2"/></svg><div class="t" style="left:84px;top:741px;height:16px;line-height:16px;font-size:13px;color:#c8c8c8;">在这里输入你要搜索的内容</div><svg class="a" style="left:366px;top:739px;" width="11" height="17" viewBox="0 0 11 17"><rect x="3" y="0.5" width="5" height="10" rx="2.5" fill="none" stroke="#9a9a9a" stroke-width="1.2"/><path d="M1 8a4.5 4.5 0 0 0 9 0M5.5 13v3M3 16h5" stroke="#9a9a9a" stroke-width="1.2" fill="none"/></svg><svg class="a" style="left:405px;top:739px;" width="22" height="17" viewBox="0 0 22 17"><rect x="4" y="1" width="14" height="15" fill="none" stroke="#fff" stroke-width="1.5"/><path d="M1 3v11M21 3v11" stroke="#fff" stroke-width="1.5"/></svg><svg class="a" style="left:455px;top:738px;" width="23" height="23" viewBox="0 0 23 23"><g fill="#e8e8e8"><path d="M11 11C4 11 1 8 1 5s3-5 6-4 4 5 4 10z"/><path d="M12 11c0-7 3-10 6-10s5 3 4 6-5 4-10 4z"/><path d="M12 12c7 0 10 3 10 6s-3 5-6 4-4-5-4-10z"/><path d="M11 12c0 7-3 10-6 10s-5-3-4-6 5-4 10-4z"/></g></svg><svg class="a" style="left:506px;top:735px;" width="26" height="28" viewBox="0 0 26 28"><text x="13" y="24" font-size="34" font-weight="bold" fill="#e8e8e8" text-anchor="middle" font-family="Liberation Sans">e</text><path d="M4 25c-3-3 3-12 10-17s10-5 10-2" stroke="#e8e8e8" stroke-width="1.6" fill="none"/></svg><svg class="a" style="left:557px;top:735px;" width="26" height="26" viewBox="0 0 26 26"><path d="M12 6a8 8 0 1 0 8 8 5 5 0 1 0-5 5" fill="none" stroke="#e8e8e8" stroke-width="1.5"/><circle cx="11" cy="15" r="3.5" fill="none" stroke="#e8e8e8" stroke-width="1.5"/><path d="M15 10c0-5 2-8 5-8s5 3 5 8l1 2H14z" fill="#f8c020"/><circle cx="20" cy="13" r="1.5" fill="#f8c020"/></svg><svg class="a" style="left:607px;top:734px;" width="28" height="28" viewBox="0 0 28 28"><text x="14" y="25" font-size="36" font-weight="bold" fill="#1a7ae0" text-anchor="middle" font-family="Liberation Sans">e</text></svg><svg class="a" style="left:655px;top:734px;" width="30" height="29" viewBox="0 0 30 29"><text x="15" y="25" font-size="35" font-weight="bold" fill="#3a9af0" text-anchor="middle" font-family="Liberation Sans">e</text><path d="M4 24c2 4 9 1 15-5s9-14 5-16-8 0-12 3" stroke="#f0c030" stroke-width="2" fill="none"/></svg><svg class="a" style="left:708px;top:737px;" width="23" height="22" viewBox="0 0 23 22"><path d="M1 2h8l2 2h11v17H1z" fill="#e8b840"/><rect x="1" y="7" width="21" height="14" fill="#f8d878"/><rect x="7" y="13" width="9" height="8" fill="#2a90e0"/><rect x="9" y="16" width="5" height="5" fill="#f8d878"/></svg><svg class="a" style="left:756px;top:736px;" width="25" height="25" viewBox="0 0 25 25"><path d="M20 6a10 10 0 1 0 3 8h-10v4h5" fill="none" stroke="#2a8ae8" stroke-width="5"/></svg><svg class="a" style="left:805px;top:737px;" width="23" height="23" viewBox="0 0 23 23"><circle cx="11.5" cy="11.5" r="10.5" fill="#3ab03a"/><text x="11.5" y="18" font-size="20" font-weight="bold" fill="#fff" text-anchor="middle" font-family="Liberation Sans">e</text></svg><svg class="a" style="left:852px;top:736px;" width="24" height="24" viewBox="0 0 24 24"><rect x="0" y="0" width="24" height="24" rx="3" fill="#f0a020"/><rect x="3" y="3" width="18" height="18" fill="#fff4d0"/><path d="M5 8h12M5 12h12M5 16h8" stroke="#a08040"/><path d="M10 20l12-14" stroke="#e04010" stroke-width="2"/></svg><svg class="a" style="left:900px;top:736px;" width="24" height="24" viewBox="0 0 24 24"><rect x="0" y="0" width="24" height="24" rx="4" fill="#1a8ff0"/><path d="M12 5v14M5 12h14" stroke="#fff" stroke-width="2"/><path d="M8 8a5.5 5.5 0 0 0 0 8M16 8a5.5 5.5 0 0 1 0 8" stroke="#fff" stroke-width="1.6" fill="none"/></svg><div class="a" style="left:748px;top:766px;width:40px;height:2px;background:#7ab0e8;"></div><div class="a" style="left:797px;top:766px;width:37px;height:2px;background:#7ab0e8;"></div><div class="a" style="left:845px;top:766px;width:40px;height:2px;background:#7ab0e8;"></div><div class="a" style="left:893px;top:766px;width:38px;height:2px;background:#7ab0e8;"></div><div class="t" style="left:948px;top:740px;height:16px;line-height:16px;font-size:12px;color:#e0e0e0;">链接</div><div class="t" style="left:1004px;top:732px;height:16px;line-height:16px;font-size:12px;color:#fff;">70%</div><div class="t" style="left:992px;top:749px;height:16px;line-height:16px;font-size:12px;color:#fff;">CPU使用</div><svg class="a" style="left:1060px;top:743px;" width="12" height="8" viewBox="0 0 12 8"><path d="M1 7l5-5 5 5" stroke="#fff" stroke-width="1.3" fill="none"/></svg><svg class="a" style="left:1083px;top:740px;" width="17" height="16" viewBox="0 0 17 16"><rect x="5" y="5" width="11" height="8" fill="none" stroke="#fff" stroke-width="1.3"/><path d="M1 3v4M4 3v4M0 7h5M2.5 7v5" stroke="#fff"/></svg><svg class="a" style="left:1107px;top:740px;" width="17" height="16" viewBox="0 0 17 16"><path d="M2 15a13 13 0 0 1 13-13M5 15a10 10 0 0 1 10-10M8 15a7 7 0 0 1 7-7" stroke="#fff" stroke-width="1.2" fill="none"/><circle cx="14" cy="14" r="1.5" fill="#fff"/></svg><svg class="a" style="left:1130px;top:740px;" width="17" height="16" viewBox="0 0 17 16"><path d="M1 5h3l4-4v14l-4-4H1z" fill="none" stroke="#fff" stroke-width="1.2"/><path d="M10 5a3 3 0 0 1 0 6M12 3a6 6 0 0 1 0 10M14 1a9 9 0 0 1 0 14" stroke="#fff" fill="none"/></svg><svg class="a" style="left:1154px;top:741px;" width="23" height="13" viewBox="0 0 23 13"><rect x="0.5" y="0.5" width="22" height="12" fill="none" stroke="#fff"/><path d="M3 3h17M3 6h17M5 9h13" stroke="#fff" stroke-dasharray="1.5 1"/></svg><div class="t" style="left:1188px;top:740px;height:16px;line-height:16px;font-size:13px;color:#fff;">中</div><svg class="a" style="left:1213px;top:739px;" width="18" height="18" viewBox="0 0 18 18"><rect x="0" y="1" width="17" height="16" rx="3" fill="#e0501a" transform="rotate(-8 9 9)"/><path d="M12 5c-2-1-6-1-6 2s6 2 6 5-4 3-6 2" stroke="#fff" stroke-width="2" fill="none"/></svg><div class="t" style="left:1261px;top:732px;height:16px;line-height:16px;font-size:12px;color:#fff;">17:06</div><div class="t" style="left:1247px;top:749px;height:16px;line-height:16px;font-size:12px;color:#fff;">2018/5/15</div><svg class="a" style="left:1322px;top:737px;" width="24" height="24" viewBox="0 0 24 24"><path d="M1 2h17v12H9l-4 4v-4H1z" fill="#fff"/><path d="M4 6h11M4 9h11" stroke="#050a10"/><circle cx="17" cy="17" r="6" fill="#303030" stroke="#fff"/><text x="17" y="21" font-size="9" fill="#fff" text-anchor="middle" font-family="Liberation Sans">1</text></svg></body></html>
